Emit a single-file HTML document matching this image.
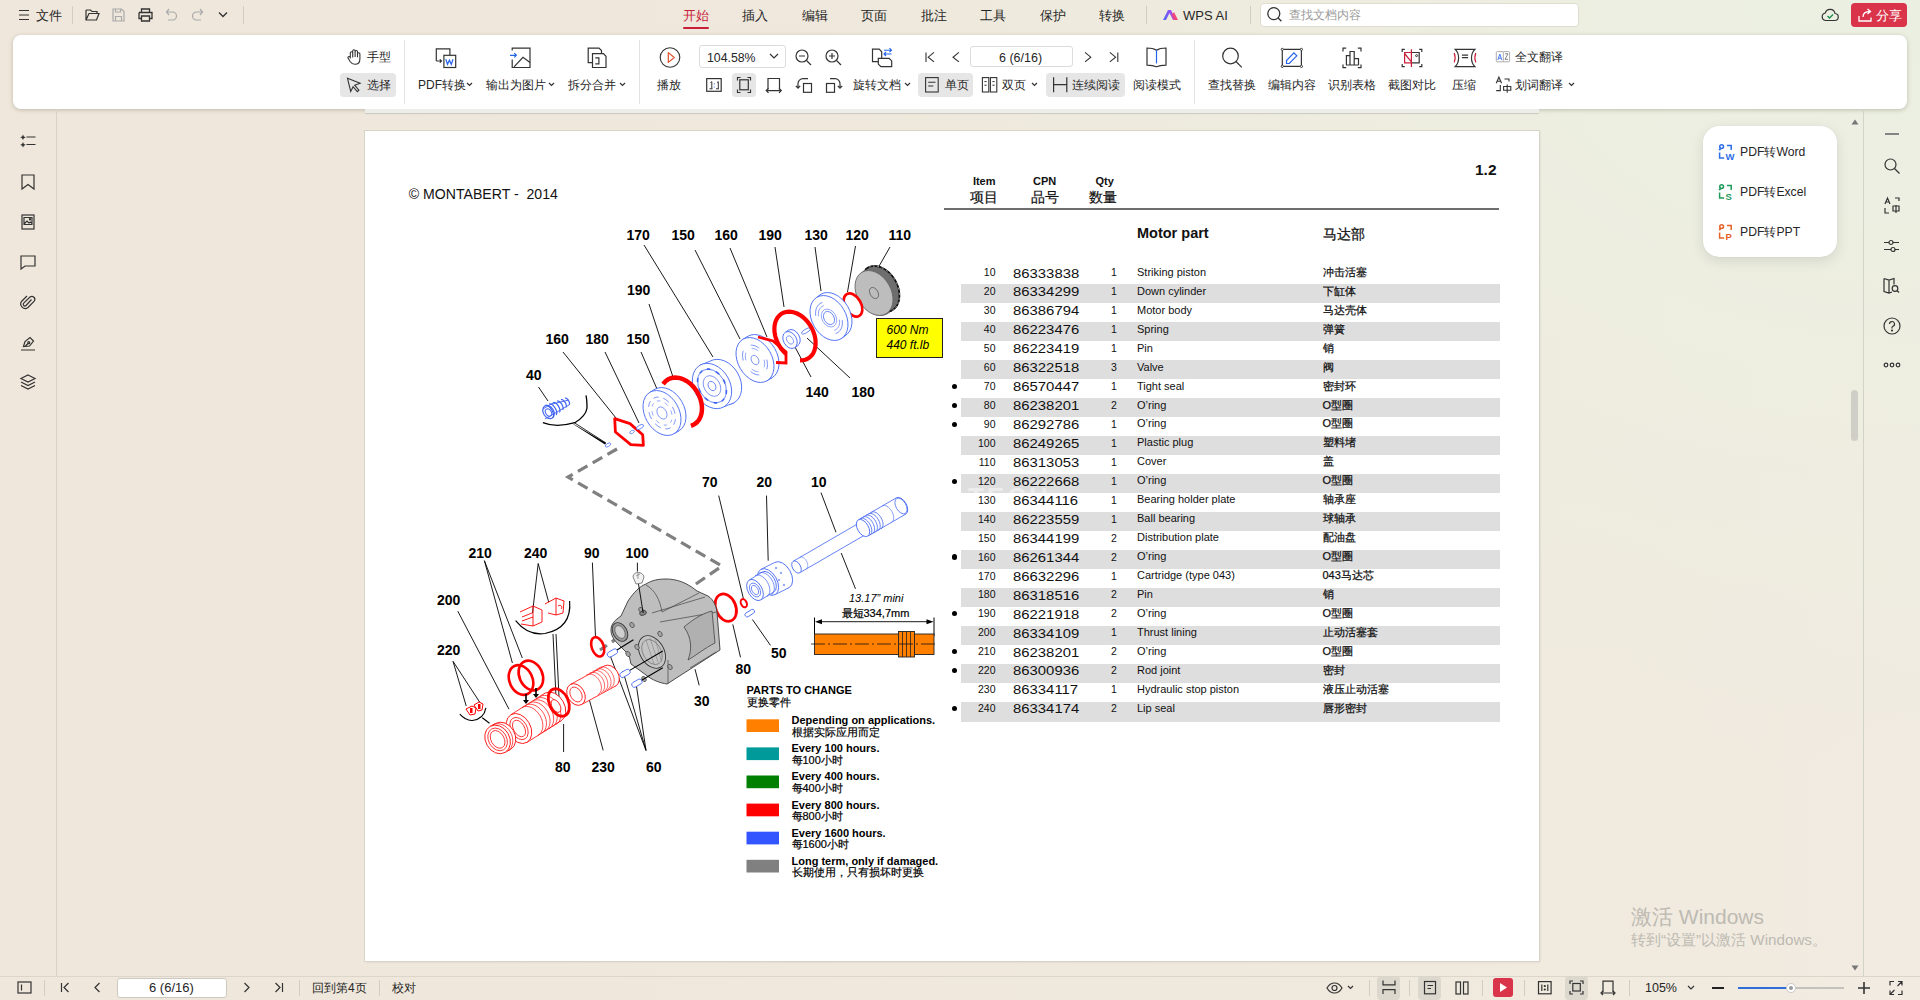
<!DOCTYPE html>
<html><head><meta charset="utf-8">
<style>
*{margin:0;padding:0;box-sizing:border-box}
html,body{width:1920px;height:1000px;overflow:hidden}
body{font-family:"Liberation Sans",sans-serif;color:#222;position:relative;
background:radial-gradient(ellipse 1100px 760px at 1920px 0px,#ebefe1 0%,#ecefe1 25%,rgba(240,236,224,0) 100%),linear-gradient(90deg,#efe7db 0%,#efe8dc 60%,#f1ebe1 100%);}
.a{position:absolute;white-space:nowrap}
.t{font-size:13px;line-height:16px;color:#262626}
.s{font-size:12px;line-height:14px;color:#262626}
.sep{position:absolute;width:1px;background:#d3cdc0}
svg.i{position:absolute;overflow:visible}
.card{position:absolute;left:13px;top:35px;width:1894px;height:74px;background:#fff;border-radius:8px;box-shadow:0 1px 4px rgba(110,110,90,.38)}
.hl{position:absolute;background:#e6e6e6;border-radius:4px}
#page{position:absolute;left:365px;top:131px;width:1174px;height:830px;background:#fff;box-shadow:0 0 0 1px #d8d4c8,1px 1px 2px rgba(0,0,0,.12)}
#prev{position:absolute;left:365px;top:109px;width:1174px;height:4px;background:#ededeb;box-shadow:0 1px 1px #cdc9bd}
.pt{position:absolute;white-space:nowrap;font-family:"Liberation Sans",sans-serif;color:#111}
</style></head><body>

<!-- top menubar -->
<div id="topbar">
<svg class="i" style="left:18px;top:9px" width="12" height="12" viewBox="0 0 12 12"><path d="M1 1.5h10M1 6h10M1 10.5h10" stroke="#333" stroke-width="1.2"/></svg>
<div class="a t" style="left:36px;top:8px">文件</div>
<div class="sep" style="left:72px;top:6px;height:18px"></div>
<svg class="i" style="left:85px;top:8px" width="15" height="14" viewBox="0 0 15 14" fill="none" stroke="#333" stroke-width="1.2"><path d="M1 2h4.5l1.5 1.5h5v2M1 2v10h10.5l2.5-6.5h-10L1 12"/></svg>
<svg class="i" style="left:112px;top:8px" width="13" height="14" viewBox="0 0 13 14" fill="none" stroke="#aaa" stroke-width="1.2"><path d="M1 1h8.5l2.5 2.5V13H1z M3.5 13V8.5h6V13 M3.5 1v3h5V1"/></svg>
<svg class="i" style="left:138px;top:8px" width="15" height="14" viewBox="0 0 15 14" fill="none" stroke="#333" stroke-width="1.3"><path d="M3.5 4.5V1h8v3.5M1 4.5h13v6h-2.5M1 4.5v6h2.5M3.5 8h8v5h-8z"/></svg>
<svg class="i" style="left:165px;top:8px" width="13" height="14" viewBox="0 0 13 14" fill="none" stroke="#aaa" stroke-width="1.2"><path d="M4 1L1.5 4 4 7M1.5 4h6a4 4 0 0 1 0 8H3"/></svg>
<svg class="i" style="left:191px;top:8px" width="13" height="14" viewBox="0 0 13 14" fill="none" stroke="#aaa" stroke-width="1.2"><path d="M9 1l2.5 3L9 7M11.5 4h-6a4 4 0 0 0 0 8H10"/></svg>
<svg class="i" style="left:218px;top:11px" width="10" height="7" viewBox="0 0 10 7" fill="none" stroke="#333" stroke-width="1.3"><path d="M1 1.5l4 4 4-4"/></svg>
<div class="sep" style="left:243px;top:6px;height:18px"></div>

<div class="a t" style="left:683px;top:8px;color:#c9203a">开始</div>
<div class="a" style="left:683px;top:27px;width:26px;height:2px;background:#c9203a;border-radius:1px"></div>
<div class="a t" style="left:742px;top:8px">插入</div>
<div class="a t" style="left:802px;top:8px">编辑</div>
<div class="a t" style="left:861px;top:8px">页面</div>
<div class="a t" style="left:921px;top:8px">批注</div>
<div class="a t" style="left:980px;top:8px">工具</div>
<div class="a t" style="left:1040px;top:8px">保护</div>
<div class="a t" style="left:1099px;top:8px">转换</div>
<div class="sep" style="left:1146px;top:6px;height:18px"></div>
<svg class="i" style="left:1163px;top:9px" width="16" height="12" viewBox="0 0 16 12"><defs><linearGradient id="wg" x1="0" x2="1"><stop offset="0" stop-color="#4a6cf7"/><stop offset=".6" stop-color="#9b4cf0"/><stop offset="1" stop-color="#f0467a"/></linearGradient></defs><path d="M0 11L5 1h3l5 10h-3L6.5 4 3 11z" fill="url(#wg)"/><path d="M9 6l2-3 4 8h-3z" fill="#f0467a"/></svg>
<div class="a t" style="left:1183px;top:8px">WPS AI</div>
<div class="sep" style="left:1250px;top:6px;height:18px"></div>
<div class="a" style="left:1259.5px;top:3px;width:319.5px;height:23.5px;background:#fff;border:1px solid #e0dccf;border-radius:4px"></div>
<svg class="i" style="left:1265px;top:5px" width="20" height="20" viewBox="1265 5 20 20" fill="none" stroke="#333" stroke-width="1.3"><circle cx="1273.8" cy="13.6" r="6"/><path d="M1278 17.8l3.4 3.4"/></svg>
<div class="a t" style="left:1289px;top:7px;color:#9a9a9a;font-size:12.2px">查找文档内容</div>
<svg class="i" style="left:1821px;top:7px" width="18" height="16" viewBox="0 0 18 16" fill="none" stroke="#333" stroke-width="1.2"><path d="M4.5 13.5h9a3.5 3.5 0 0 0 .5-7A5 5 0 0 0 4.3 6 3.8 3.8 0 0 0 4.5 13.5z"/><path d="M6.5 9l2 2 3.5-3.5" stroke="#1a8c4e" stroke-width="1.4"/></svg>
<div class="a" style="left:1851px;top:3px;width:56px;height:24px;background:#d9344a;border-radius:4px"></div>
<svg class="i" style="left:1858px;top:8px" width="16" height="14" viewBox="0 0 16 14" fill="none" stroke="#fff" stroke-width="1.3"><path d="M1 8v5h12V9.5M5 9c0-4 3-5.5 7-5.5M9.5 1l3 2.5-3 2.5"/></svg>
<div class="a t" style="left:1876px;top:8px;color:#fff">分享</div>
</div>

<!-- toolbar card -->
<div class="card"></div>
<svg class="i" style="left:345px;top:47px" width="18" height="19" viewBox="345 47 18 19" fill="none" stroke="#333" stroke-width="1.1"><path d="M350.3 58.5v-5.6a1.2 1.2 0 0 1 2.4 0v4.6M352.7 57.2v-6.3a1.2 1.2 0 0 1 2.4 0v6.1M355.1 57v-5.3a1.2 1.2 0 0 1 2.4 0v5.6M357.5 57.3v-3.3a1.2 1.2 0 0 1 2.4 0v5c0 3.3-2 5.3-5 5.3-2.3 0-3.6-1-4.8-2.8l-2.1-3.4a1.1 1.1 0 0 1 1.8-1.2l.5.6"/></svg>
<div class="a s" style="left:367px;top:50px;">手型</div>
<div class="hl" style="left:340px;top:73px;width:56px;height:24px"></div>
<svg class="i" style="left:345px;top:76px" width="18" height="18" viewBox="345 76 18 18" fill="none" stroke="#333" stroke-width="1.1"><path d="M347.5 78.3l12.6 5-5.4 1.9 4.2 4.9-1.6 1.5-4.2-4.9-2.4 4.8z"/></svg>
<div class="a s" style="left:367px;top:78px;">选择</div>
<div class="sep" style="left:404px;top:40px;height:64px;background:#e3e3e3"></div>
<svg class="i" style="left:434px;top:46px" width="24" height="24" viewBox="434 46 24 24" fill="none" stroke="#333" stroke-width="1.2"><path d="M436.3 61V48.9h13.6v6.2M436.3 61h5M439.8 59.4l1.7 1.6-1.7 1.6"/><rect x="443.9" y="55.3" width="11.8" height="12.2"/><path d="M445.8 59.3l1.7 5 1.9-4.1 1.9 4.1 1.7-5" stroke="#2563eb"/></svg>
<div class="a s" style="left:418px;top:78px;">PDF转换</div>
<svg class="i" style="left:466px;top:82px" width="7" height="5" viewBox="0 0 7 5" fill="none" stroke="#333" stroke-width="1.2"><path d="M1 1l2.5 2.5L6 1"/></svg>
<svg class="i" style="left:508px;top:46px" width="24" height="24" viewBox="508 46 24 24" fill="none" stroke="#333" stroke-width="1.2"><path d="M512.2 59.4v8.1H530V48.1h-17.8v2.5"/><path d="M514 66.8l9-9.5 7 5.3"/><path d="M510 55.3h6.2M514.3 53.2l2.1 2.1-2.1 2.1" stroke="#2563eb"/></svg>
<div class="a s" style="left:486px;top:78px;">输出为图片</div>
<svg class="i" style="left:548px;top:82px" width="7" height="5" viewBox="0 0 7 5" fill="none" stroke="#333" stroke-width="1.2"><path d="M1 1l2.5 2.5L6 1"/></svg>
<svg class="i" style="left:585px;top:46px" width="24" height="24" viewBox="585 46 24 24" fill="none" stroke="#333" stroke-width="1.2"><path d="M592.4 62.6h-4.2V48.1h10.8l2.5 2.5v2.9"/><path d="M592.5 53.7h10.9l2.6 2.6v11.2h-13.5z"/><path d="M595.3 57.8h3.6v6h-3.6"/></svg>
<div class="a s" style="left:568px;top:78px;">拆分合并</div>
<svg class="i" style="left:619px;top:82px" width="7" height="5" viewBox="0 0 7 5" fill="none" stroke="#333" stroke-width="1.2"><path d="M1 1l2.5 2.5L6 1"/></svg>
<div class="sep" style="left:639px;top:40px;height:64px;background:#e3e3e3"></div>
<svg class="i" style="left:658px;top:46px" width="24" height="24" viewBox="658 46 24 24" fill="none" stroke="#333" stroke-width="1.2"><circle cx="670" cy="57.5" r="9.8" stroke-width="1.1"/><path d="M668.3 52.6v9.8l6-4.9z" stroke="#e0502b" stroke-width="1.2" stroke-linejoin="round"/></svg>
<div class="a s" style="left:657px;top:78px;">播放</div>
<div class="a" style="left:699px;top:45px;width:87px;height:23px;border:1px solid #dcdcdc;border-radius:3px;background:#fff"></div>
<div class="a s" style="left:707px;top:51px;font-size:12.3px">104.58%</div>
<svg class="i" style="left:769px;top:53px" width="10" height="7" viewBox="0 0 10 7" fill="none" stroke="#333" stroke-width="1.2"><path d="M1 1l4 4 4-4"/></svg>
<svg class="i" style="left:795px;top:49px" width="17" height="17" viewBox="0 0 17 17" fill="none" stroke="#333" stroke-width="1.2"><circle cx="7" cy="7" r="6"/><path d="M11.5 11.5l4.5 4.5M4 7h6"/></svg>
<svg class="i" style="left:825px;top:49px" width="17" height="17" viewBox="0 0 17 17" fill="none" stroke="#333" stroke-width="1.2"><circle cx="7" cy="7" r="6"/><path d="M11.5 11.5l4.5 4.5M4 7h6M7 4v6"/></svg>
<svg class="i" style="left:870px;top:46px" width="24" height="23" viewBox="870 46 24 23" fill="none" stroke="#333" stroke-width="1.2"><path d="M878.3 61.7h-5.8V49.2h6.7l2.5 2.6v6.5"/><path d="M878.3 58.3h10.8l2.6 2.6v5.8h-10.8l-2.6-2.6z" fill="#fff"/><path d="M884 50.2h7.5M889.5 48.2l2 2-2 2M891.5 54h-7.5M886 52l-2 2 2 2" stroke="#2563eb" stroke-width="1.1"/></svg>
<div class="a s" style="left:853px;top:78px;">旋转文档</div>
<svg class="i" style="left:904px;top:82px" width="7" height="5" viewBox="0 0 7 5" fill="none" stroke="#333" stroke-width="1.2"><path d="M1 1l2.5 2.5L6 1"/></svg>
<svg class="i" style="left:704px;top:76px" width="20" height="18" viewBox="704 76 20 18" fill="none" stroke="#333" stroke-width="1.2"><rect x="706.7" y="78.6" width="14.5" height="12.7"/><path d="M710.5 82.5l1.3-.8v7M717 82.5l1.3-.8v7M709.5 88.8h3M716 88.8h3" stroke-width="1"/><circle cx="714.3" cy="83.8" r=".6" fill="#2563eb" stroke="none"/><circle cx="714.3" cy="87" r=".6" fill="#2563eb" stroke="none"/></svg>
<div class="hl" style="left:732px;top:73px;width:24px;height:24px"></div>
<svg class="i" style="left:735px;top:76px" width="18" height="18" viewBox="735 76 18 18" fill="none" stroke="#333" stroke-width="1.2"><path d="M737.5 80.5v-3h3M747.5 77.5h3v3M750.5 89.5v3h-3M740.5 92.5h-3v-3"/><rect x="739.8" y="79.8" width="8.5" height="10"/></svg>
<svg class="i" style="left:764px;top:76px" width="20" height="18" viewBox="764 76 20 18" fill="none" stroke="#333" stroke-width="1.2"><path d="M768 89.5V78.5h11.5v11"/><path d="M766 90.6h15.5M768.5 88.3l-2.3 2.3 2.3 2.3M779 88.3l2.3 2.3-2.3 2.3"/></svg>
<svg class="i" style="left:795px;top:76px" width="18" height="18" viewBox="795 76 18 18" fill="none" stroke="#333" stroke-width="1.2"><rect x="803.5" y="83.5" width="8" height="8.8"/><path d="M808 78.6h-5a5 5 0 0 0-5 5v4.5M795.8 85.8l2.2 2.4 2.2-2.4"/></svg>
<svg class="i" style="left:825px;top:76px" width="18" height="18" viewBox="825 76 18 18" fill="none" stroke="#333" stroke-width="1.2"><rect x="826.5" y="83.5" width="8" height="8.8"/><path d="M830 78.6h5a5 5 0 0 1 5 5v4.5M837.8 85.8l2.2 2.4 2.2-2.4"/></svg>
<svg class="i" style="left:924px;top:50px" width="13" height="14" viewBox="924 50 13 14" fill="none" stroke="#333" stroke-width="1.1"><path d="M926 52.4v9.5M934 52.4l-5.8 4.8 5.8 4.7"/></svg>
<svg class="i" style="left:951px;top:50px" width="10" height="14" viewBox="951 50 10 14" fill="none" stroke="#333" stroke-width="1.1"><path d="M958.9 52.4l-5.9 4.8 5.9 4.7"/></svg>
<div class="a" style="left:970px;top:46px;width:103px;height:21px;border:1px solid #dcdcdc;border-radius:3px;background:#fff"></div>
<div class="a s" style="left:999px;top:51px;font-size:12.5px">6 (6/16)</div>
<svg class="i" style="left:1083px;top:50px" width="10" height="14" viewBox="1083 50 10 14" fill="none" stroke="#333" stroke-width="1.1"><path d="M1085 52.4l5.8 4.8-5.8 4.7"/></svg>
<svg class="i" style="left:1108px;top:50px" width="12" height="14" viewBox="1108 50 12 14" fill="none" stroke="#333" stroke-width="1.1"><path d="M1109.8 52.4l5.8 4.8-5.8 4.7M1117.8 52.4v9.5"/></svg>
<svg class="i" style="left:1145px;top:46px" width="24" height="23" viewBox="1145 46 24 23" fill="none" stroke="#333" stroke-width="1.2"><path d="M1156.5 50.2c-2.5-1.6-5.6-2.2-9.5-2.2v17.2c3.9 0 7 .4 9.5 1.6 2.5-1.2 5.6-1.6 9.5-1.6V48c-3.9 0-7 .6-9.5 2.2z"/><path d="M1156.5 49.8v13.6" stroke="#2563eb"/></svg>
<div class="a s" style="left:1133px;top:78px;">阅读模式</div>
<div class="hl" style="left:918px;top:73px;width:55px;height:24px"></div>
<svg class="i" style="left:924px;top:76px" width="16" height="18" viewBox="924 76 16 18" fill="none" stroke="#333" stroke-width="1.1"><rect x="925.6" y="77.6" width="12.6" height="14.4"/><path d="M928.2 82.3h7.3M928.2 86h5.1"/></svg>
<div class="a s" style="left:945px;top:78px;">单页</div>
<svg class="i" style="left:981px;top:76px" width="18" height="18" viewBox="981 76 18 18" fill="none" stroke="#333" stroke-width="1.1"><rect x="982.4" y="77.6" width="6.4" height="14.4"/><rect x="990.4" y="77.6" width="6.4" height="14.4"/><path d="M984.4 81.6h2.2M984.4 85.2h2.2M992.4 81.6h2.2M992.4 85.2h2.2" stroke-width="1"/></svg>
<div class="a s" style="left:1002px;top:78px;">双页</div>
<svg class="i" style="left:1031px;top:82px" width="7" height="5" viewBox="0 0 7 5" fill="none" stroke="#333" stroke-width="1.2"><path d="M1 1l2.5 2.5L6 1"/></svg>
<div class="hl" style="left:1046px;top:73px;width:79px;height:24px"></div>
<svg class="i" style="left:1052px;top:76px" width="17" height="18" viewBox="1052 76 17 18" fill="none" stroke="#333" stroke-width="1.2"><path d="M1053.6 77.2v15M1066.8 77.2v15M1053.6 84.6h13.2"/></svg>
<div class="a s" style="left:1072px;top:78px;">连续阅读</div>
<div class="sep" style="left:1194px;top:40px;height:64px;background:#e3e3e3"></div>
<svg class="i" style="left:1218px;top:44px" width="26" height="26" viewBox="1218 44 26 26" fill="none" stroke="#333" stroke-width="1.2"><circle cx="1230.5" cy="56" r="7.8"/><path d="M1236 61.5l5.8 5.8"/></svg>
<div class="a s" style="left:1208px;top:78px;">查找替换</div>
<svg class="i" style="left:1279px;top:46px" width="26" height="24" viewBox="1279 46 26 24" fill="none" stroke="#333" stroke-width="1.2"><path d="M1283.6 49.4h16.5M1283.6 66.4h16.5M1282.3 50.7v14.4M1301.4 50.7v14.4"/><circle cx="1282.3" cy="49.4" r="1.1" stroke-width="1"/><circle cx="1301.4" cy="49.4" r="1.1" stroke-width="1"/><circle cx="1282.3" cy="66.4" r="1.1" stroke-width="1"/><circle cx="1301.4" cy="66.4" r="1.1" stroke-width="1"/><path d="M1286.5 63.5v-3l7.4-7.6 2.9 2.9-7.5 7.7z" stroke="#2563eb"/></svg>
<div class="a s" style="left:1268px;top:78px;">编辑内容</div>
<svg class="i" style="left:1340px;top:46px" width="24" height="24" viewBox="1340 46 24 24" fill="none" stroke="#333" stroke-width="1.2"><path d="M1343 51.4v-3.2h3.2M1357.8 48.2h3.2v3.2M1361 64.4v3.2h-3.2M1346.2 67.6H1343v-3.2"/><path d="M1346.4 65v-9.4h3.6V65M1350 65V51.5h4.2V65M1354.2 65v-6.3h4.3V65M1346 65h12.8"/></svg>
<div class="a s" style="left:1328px;top:78px;">识别表格</div>
<svg class="i" style="left:1400px;top:47px" width="24" height="22" viewBox="1400 47 24 22" fill="none" stroke="#333" stroke-width="1.2"><path d="M1402.2 52v-2.6h2.6M1419.2 49.4h2.6V52M1421.8 64v2.6h-2.6M1404.8 66.6h-2.6V64"/><path d="M1411.4 52.5h7.8v10.4h-7.8"/><circle cx="1416.6" cy="55.6" r="1" stroke-width="1"/><path d="M1411.4 52.5h-6.8v10.4h6.8M1411.4 49.2v17.7M1404.6 53.5l6.8 8.4" stroke="#c9203a"/></svg>
<div class="a s" style="left:1388px;top:78px;">截图对比</div>
<svg class="i" style="left:1450px;top:46px" width="30" height="24" viewBox="1450 46 30 24" fill="none" stroke="#333" stroke-width="1.2"><path d="M1455.2 49.4h19.7c-2.6 2.5-3.4 5.3-3.4 8.6s.8 6.1 3.4 8.6h-19.7c2.6-2.5 3.4-5.3 3.4-8.6s-.8-6.1-3.4-8.6z"/><path d="M1461.9 55.1h6.2M1461.9 57.7h6.2"/><path d="M1454.2 53c1.2 3 1.2 6.4 0 9.4M1475.8 53c-1.2 3-1.2 6.4 0 9.4" stroke="#c9203a"/></svg>
<div class="a s" style="left:1452px;top:78px;">压缩</div>
<svg class="i" style="left:1494px;top:49px" width="18" height="15" viewBox="1494 49 18 15" fill="none" stroke="#333" stroke-width="1.2"><rect x="1502.6" y="51.6" width="7" height="10.2" rx="1" stroke="#aaa" stroke-width="1"/><rect x="1496.3" y="51.6" width="7" height="10.2" rx="1" fill="#fff" stroke="#aaa" stroke-width="1"/><path d="M1497.8 60l2-6 2 6M1498.5 58.2h2.6" stroke="#4a7cf0" stroke-width="1"/><path d="M1505 53.8h3l-3 5.5h3" stroke="#777" stroke-width=".9"/></svg>
<div class="a s" style="left:1515px;top:50px;">全文翻译</div>
<svg class="i" style="left:1494px;top:76px" width="20" height="18" viewBox="1494 76 20 18" fill="none" stroke="#333" stroke-width="1.2"><path d="M1496.2 83.2l2.7-6 2.7 6M1497 81.3h3.8" stroke-width="1.1"/><path d="M1504.5 79h4.5v2.5M1500.3 85v5.6h-4.1M1503.6 86.5h7.2v3.8h-7.2zM1507.2 84.5v8.2" stroke-width="1.1"/></svg>
<div class="a s" style="left:1515px;top:78px;">划词翻译</div>
<svg class="i" style="left:1568px;top:82px" width="7" height="5" viewBox="0 0 7 5" fill="none" stroke="#333" stroke-width="1.2"><path d="M1 1l2.5 2.5L6 1"/></svg>


<!-- left sidebar -->
<div class="sep" style="left:56px;top:109px;height:867px;background:#d6d2c8"></div>
<!-- right sidebar -->
<div class="sep" style="left:1863px;top:109px;height:867px;background:#d3d4c8"></div>

<!-- pages -->
<div id="prev"></div>
<div id="page"></div>
<!--DIAG-->
<svg class="i" style="left:0;top:0" width="1920" height="1000" viewBox="0 0 1920 1000">
<style>.lb{font-family:"Liberation Sans";font-weight:bold;font-size:14px;fill:#000}.it{font-family:"Liberation Sans";font-style:italic;font-size:12px;fill:#000}.lg{font-family:"Liberation Sans";font-size:11px;fill:#000;stroke:#000;stroke-width:0.2px}</style>
<text x="408.8" y="198.8" style="font-family:Liberation Sans;font-size:14.1px;fill:#111;white-space:pre">© MONTABERT -  2014</text>
<polyline points="617,449 568,477 722,566 600,650" fill="none" stroke="#808080" stroke-width="3.2" stroke-dasharray="11,6"/>
<text x="626.5" y="239.5" class="lb">170</text>
<text x="671.5" y="239.5" class="lb">150</text>
<text x="714.5" y="239.5" class="lb">160</text>
<text x="758.5" y="239.5" class="lb">190</text>
<text x="804.5" y="239.5" class="lb">130</text>
<text x="845.5" y="239.5" class="lb">120</text>
<text x="888.5" y="239.5" class="lb">110</text>
<text x="627" y="294.5" class="lb">190</text>
<text x="545.5" y="344" class="lb">160</text>
<text x="585.5" y="344" class="lb">180</text>
<text x="626.5" y="344" class="lb">150</text>
<text x="526" y="380" class="lb">40</text>
<text x="805.5" y="397" class="lb">140</text>
<text x="851.5" y="397" class="lb">180</text>
<line x1="644" y1="245" x2="713" y2="357" stroke="#000" stroke-width="0.9"/>
<line x1="695" y1="250" x2="740" y2="339" stroke="#000" stroke-width="0.9"/>
<line x1="730" y1="248" x2="767" y2="337" stroke="#000" stroke-width="0.9"/>
<line x1="775" y1="247" x2="784" y2="307" stroke="#000" stroke-width="0.9"/>
<line x1="815" y1="247" x2="821" y2="291" stroke="#000" stroke-width="0.9"/>
<line x1="855.5" y1="246" x2="847.5" y2="292" stroke="#000" stroke-width="0.9"/>
<line x1="890" y1="247" x2="878" y2="268" stroke="#000" stroke-width="0.9"/>
<line x1="649" y1="304" x2="673" y2="377" stroke="#000" stroke-width="0.9"/>
<line x1="563" y1="352" x2="616" y2="418" stroke="#000" stroke-width="0.9"/>
<line x1="605" y1="352" x2="639" y2="423" stroke="#000" stroke-width="0.9"/>
<line x1="641" y1="352" x2="657" y2="389" stroke="#000" stroke-width="0.9"/>
<line x1="538.5" y1="387" x2="548" y2="401" stroke="#000" stroke-width="0.9"/>
<line x1="795" y1="347" x2="811" y2="377" stroke="#000" stroke-width="0.9"/>
<line x1="807" y1="338" x2="850" y2="378" stroke="#000" stroke-width="0.9"/>
<ellipse cx="880" cy="289" rx="17.5" ry="24.5" transform="rotate(-30 880 289)" stroke="#222" stroke-width="1.2" fill="#6e6e6e" />
<ellipse cx="879" cy="289.8" rx="17.5" ry="24.5" transform="rotate(-30 879 289.8)" stroke="none" stroke-width="0" fill="#6e6e6e" />
<ellipse cx="878" cy="290.6" rx="17.5" ry="24.5" transform="rotate(-30 878 290.6)" stroke="none" stroke-width="0" fill="#6e6e6e" />
<ellipse cx="877" cy="291.4" rx="17.5" ry="24.5" transform="rotate(-30 877 291.4)" stroke="none" stroke-width="0" fill="#6e6e6e" />
<ellipse cx="876" cy="292.2" rx="17.5" ry="24.5" transform="rotate(-30 876 292.2)" stroke="none" stroke-width="0" fill="#6e6e6e" />
<ellipse cx="875" cy="293.0" rx="17.5" ry="24.5" transform="rotate(-30 875 293.0)" stroke="none" stroke-width="0" fill="#6e6e6e" />
<polyline points="865.30,269.62 866.48,268.63 867.75,267.78 869.12,267.10 870.57,266.59 872.09,266.24 873.67,266.07 875.30,266.07 876.97,266.25 878.66,266.60 880.36,267.12 882.05,267.81 883.74,268.66 885.39,269.66 887.00,270.81 888.56,272.10 890.05,273.52 891.47,275.06 892.80,276.70 894.03,278.43 895.16,280.25 896.17,282.13 897.05,284.07 897.81,286.04 898.43,288.03 898.91,290.04 899.25,292.03 899.44,294.00 899.48,295.94 899.38,297.82 899.13,299.63 898.73,301.36 898.19,303.00 897.51,304.53 896.69,305.95 895.76,307.23 894.70,308.38 893.52,309.37 892.25,310.22 890.88,310.90 889.43,311.41" fill="none" stroke="#111" stroke-width="1.6" stroke-linecap="butt"/>
<polyline points="869.12,267.10 869.59,266.91 870.08,266.74 870.57,266.59" fill="none" stroke="#ddd" stroke-width="0.8" stroke-linecap="butt"/>
<polyline points="873.03,266.12 873.57,266.08 874.10,266.05 874.65,266.05" fill="none" stroke="#ddd" stroke-width="0.8" stroke-linecap="butt"/>
<polyline points="877.31,266.31 877.87,266.42 878.43,266.54 879.00,266.69" fill="none" stroke="#ddd" stroke-width="0.8" stroke-linecap="butt"/>
<polyline points="881.72,267.66 882.28,267.91 882.84,268.19 883.40,268.48" fill="none" stroke="#ddd" stroke-width="0.8" stroke-linecap="butt"/>
<polyline points="886.04,270.11 886.57,270.49 887.11,270.90 887.63,271.31" fill="none" stroke="#ddd" stroke-width="0.8" stroke-linecap="butt"/>
<polyline points="890.05,273.52 890.53,274.02 891.01,274.53 891.47,275.06" fill="none" stroke="#ddd" stroke-width="0.8" stroke-linecap="butt"/>
<polyline points="893.55,277.73 893.95,278.32 894.34,278.91 894.72,279.51" fill="none" stroke="#ddd" stroke-width="0.8" stroke-linecap="butt"/>
<polyline points="896.35,282.52 896.65,283.16 896.94,283.81 897.21,284.46" fill="none" stroke="#ddd" stroke-width="0.8" stroke-linecap="butt"/>
<polyline points="898.32,287.63 898.50,288.30 898.67,288.97 898.83,289.64" fill="none" stroke="#ddd" stroke-width="0.8" stroke-linecap="butt"/>
<polyline points="899.34,292.82 899.40,293.48 899.45,294.13 899.48,294.78" fill="none" stroke="#ddd" stroke-width="0.8" stroke-linecap="butt"/>
<polyline points="899.38,297.82 899.31,298.43 899.23,299.03 899.13,299.63" fill="none" stroke="#ddd" stroke-width="0.8" stroke-linecap="butt"/>
<polyline points="898.42,302.36 898.23,302.89 898.02,303.42 897.80,303.93" fill="none" stroke="#ddd" stroke-width="0.8" stroke-linecap="butt"/>
<polyline points="896.52,306.21 896.21,306.65 895.89,307.07 895.55,307.47" fill="none" stroke="#ddd" stroke-width="0.8" stroke-linecap="butt"/>
<polyline points="893.77,309.19 893.36,309.50 892.94,309.79 892.51,310.06" fill="none" stroke="#ddd" stroke-width="0.8" stroke-linecap="butt"/>
<ellipse cx="874" cy="293" rx="17" ry="24" transform="rotate(-30 874 293)" stroke="#666" stroke-width="0.8" fill="#bdbdbd" />
<ellipse cx="874" cy="293" rx="4" ry="6" transform="rotate(-30 874 293)" stroke="#555" stroke-width="0.7" fill="none" />
<ellipse cx="853" cy="305" rx="8" ry="12.5" transform="rotate(-30 853 305)" stroke="#ff0000" stroke-width="2.6" fill="none" />
<ellipse cx="833" cy="315" rx="17" ry="24" transform="rotate(-30 833 315)" stroke="#3f63f2" stroke-width="0.8" fill="#fff" /><polygon points="817.0,297.2153903091735 821.0,294.2153903091735 845.0,335.7846096908265 841.0,338.7846096908265" fill="#fff" stroke="none"/><line x1="817.0" y1="297.2153903091735" x2="821.0" y2="294.2153903091735" stroke="#3f63f2" stroke-width="0.8"/><line x1="841.0" y1="338.7846096908265" x2="845.0" y2="335.7846096908265" stroke="#3f63f2" stroke-width="0.8"/><ellipse cx="829" cy="318" rx="17" ry="24" transform="rotate(-30 829 318)" stroke="#3f63f2" stroke-width="0.8" fill="#fff" />
<ellipse cx="829" cy="318" rx="5" ry="7" transform="rotate(-30 829 318)" stroke="#3f63f2" stroke-width="0.7" fill="none" />
<ellipse cx="829" cy="318" rx="7" ry="9.5" transform="rotate(-30 829 318)" stroke="#3f63f2" stroke-width="0.5" fill="none" />
<polyline points="842.25,320.17 842.42,322.07 842.38,323.91 842.15,325.67 841.72,327.31 841.10,328.81 840.30,330.15 839.33,331.31 838.20,332.27 836.94,333.02 835.57,333.54" fill="none" stroke="#3f63f2" stroke-width="0.7" stroke-linecap="butt"/>
<polyline points="839.50,319.73 839.63,321.24 839.61,322.70 839.42,324.10 839.08,325.40 838.59,326.59 837.96,327.65 837.20,328.57 836.31,329.33 835.31,329.92 834.22,330.34" fill="none" stroke="#3f63f2" stroke-width="0.6" stroke-linecap="butt"/>
<polyline points="815.75,315.83 815.58,313.93 815.62,312.09 815.85,310.33 816.28,308.69 816.90,307.19 817.70,305.85 818.67,304.69 819.80,303.73 821.06,302.98 822.43,302.46" fill="none" stroke="#3f63f2" stroke-width="0.7" stroke-linecap="butt"/>
<polyline points="818.50,316.27 818.37,314.76 818.39,313.30 818.58,311.90 818.92,310.60 819.41,309.41 820.04,308.35 820.80,307.43 821.69,306.67 822.69,306.08 823.78,305.66" fill="none" stroke="#3f63f2" stroke-width="0.6" stroke-linecap="butt"/>
<ellipse cx="793" cy="338" rx="6.5" ry="9" transform="rotate(-30 793 338)" stroke="#3f63f2" stroke-width="0.8" fill="#fff" /><polygon points="785.5,332.20577136594005 788.5,330.20577136594005 797.5,345.79422863405995 794.5,347.79422863405995" fill="#fff" stroke="none"/><line x1="785.5" y1="332.20577136594005" x2="788.5" y2="330.20577136594005" stroke="#3f63f2" stroke-width="0.8"/><line x1="794.5" y1="347.79422863405995" x2="797.5" y2="345.79422863405995" stroke="#3f63f2" stroke-width="0.8"/><ellipse cx="790" cy="340" rx="6.5" ry="9" transform="rotate(-30 790 340)" stroke="#3f63f2" stroke-width="0.8" fill="#fff" />
<ellipse cx="790" cy="340" rx="3" ry="4.5" transform="rotate(-30 790 340)" stroke="#3f63f2" stroke-width="0.6" fill="none" />
<ellipse cx="806" cy="331" rx="1.8" ry="5" transform="rotate(60 806 331)" stroke="#3f63f2" stroke-width="0.7" fill="#fff" />
<polyline points="785.97,353.90 783.48,351.43 781.21,348.66 779.21,345.64 777.51,342.44 776.16,339.11 775.17,335.72 774.57,332.33 774.37,329.02 774.57,325.84 775.16,322.86 776.14,320.14 777.49,317.72 779.18,315.66 781.18,314.00 783.45,312.76 785.94,311.98 788.61,311.66 791.40,311.82 794.26,312.45 797.14,313.54 799.97,315.06 802.71,316.99 805.30,319.30 807.69,321.92 809.83,324.82 811.68,327.94 813.21,331.22 814.38,334.58 815.18,337.98 815.58,341.34 815.58,344.59 815.19,347.68 814.39,350.54 813.23,353.11 811.70,355.36 809.86,357.22 807.72,358.67 805.33,359.69 802.75,360.24 800.01,360.32" fill="none" stroke="#ff0000" stroke-width="4.2" stroke-linecap="butt"/>
<ellipse cx="760" cy="357" rx="17" ry="24" transform="rotate(-30 760 357)" stroke="#3f63f2" stroke-width="0.8" fill="#fff" /><polygon points="743.0,339.2153903091735 748.0,336.2153903091735 772.0,377.7846096908265 767.0,380.7846096908265" fill="#fff" stroke="none"/><line x1="743.0" y1="339.2153903091735" x2="748.0" y2="336.2153903091735" stroke="#3f63f2" stroke-width="0.8"/><line x1="767.0" y1="380.7846096908265" x2="772.0" y2="377.7846096908265" stroke="#3f63f2" stroke-width="0.8"/><ellipse cx="755" cy="360" rx="17" ry="24" transform="rotate(-30 755 360)" stroke="#3f63f2" stroke-width="0.8" fill="#fff" />
<ellipse cx="755" cy="360" rx="3.5" ry="5" transform="rotate(-30 755 360)" stroke="#3f63f2" stroke-width="0.6" fill="none" />
<polyline points="766.69,359.57 767.01,360.87 767.25,362.17 767.39,363.44 767.44,364.69 767.39,365.91 767.25,367.08 767.02,368.20 766.69,369.25" fill="none" stroke="#3f63f2" stroke-width="0.7" stroke-linecap="butt"/>
<polyline points="764.05,359.71 764.31,360.72 764.50,361.73 764.61,362.73 764.66,363.70 764.62,364.65 764.52,365.56 764.34,366.43 764.09,367.25" fill="none" stroke="#3f63f2" stroke-width="0.6" stroke-linecap="butt"/>
<polyline points="759.26,374.90 758.22,374.88 757.17,374.75 756.09,374.51 755.00,374.15 753.92,373.69 752.84,373.12 751.79,372.45 750.75,371.69" fill="none" stroke="#3f63f2" stroke-width="0.7" stroke-linecap="butt"/>
<polyline points="758.36,371.63 757.55,371.61 756.73,371.50 755.90,371.31 755.06,371.02 754.21,370.66 753.38,370.21 752.55,369.69 751.75,369.09" fill="none" stroke="#3f63f2" stroke-width="0.6" stroke-linecap="butt"/>
<polyline points="743.31,360.43 742.99,359.13 742.75,357.83 742.61,356.56 742.56,355.31 742.61,354.09 742.75,352.92 742.98,351.80 743.31,350.75" fill="none" stroke="#3f63f2" stroke-width="0.7" stroke-linecap="butt"/>
<polyline points="745.95,360.29 745.69,359.28 745.50,358.27 745.39,357.27 745.34,356.30 745.38,355.35 745.48,354.44 745.66,353.57 745.91,352.75" fill="none" stroke="#3f63f2" stroke-width="0.6" stroke-linecap="butt"/>
<polyline points="750.74,345.10 751.78,345.12 752.83,345.25 753.91,345.49 755.00,345.85 756.08,346.31 757.16,346.88 758.21,347.55 759.25,348.31" fill="none" stroke="#3f63f2" stroke-width="0.7" stroke-linecap="butt"/>
<polyline points="751.64,348.37 752.45,348.39 753.27,348.50 754.10,348.69 754.94,348.98 755.79,349.34 756.62,349.79 757.45,350.31 758.25,350.91" fill="none" stroke="#3f63f2" stroke-width="0.6" stroke-linecap="butt"/>
<polyline points="758,337 773,341 786,352 786,363 776,362.5" fill="none" stroke="#ff0000" stroke-width="2.8"/>
<ellipse cx="722" cy="382" rx="18" ry="24" transform="rotate(-30 722 382)" stroke="#3f63f2" stroke-width="0.8" fill="#fff" /><polygon points="700.0,365.2153903091735 710.0,361.2153903091735 734.0,402.7846096908265 724.0,406.7846096908265" fill="#fff" stroke="none"/><line x1="700.0" y1="365.2153903091735" x2="710.0" y2="361.2153903091735" stroke="#3f63f2" stroke-width="0.8"/><line x1="724.0" y1="406.7846096908265" x2="734.0" y2="402.7846096908265" stroke="#3f63f2" stroke-width="0.8"/><ellipse cx="712" cy="386" rx="18" ry="24" transform="rotate(-30 712 386)" stroke="#3f63f2" stroke-width="0.8" fill="#fff" />
<ellipse cx="712" cy="386" rx="13" ry="18" transform="rotate(-30 712 386)" stroke="#3f63f2" stroke-width="0.7" fill="none" />
<ellipse cx="712" cy="386" rx="3.5" ry="5" transform="rotate(-30 712 386)" stroke="#3f63f2" stroke-width="0.7" fill="none" />
<polyline points="723.26,379.50 723.79,380.46 724.27,381.45 724.71,382.45 725.10,383.46" fill="none" stroke="#3f63f2" stroke-width="1.6" stroke-linecap="butt"/>
<polyline points="726.40,389.90 726.41,390.90 726.37,391.88 726.28,392.83 726.13,393.76" fill="none" stroke="#3f63f2" stroke-width="1.6" stroke-linecap="butt"/>
<polyline points="724.04,398.82 723.53,399.46 722.98,400.06 722.39,400.61 721.76,401.10" fill="none" stroke="#3f63f2" stroke-width="1.6" stroke-linecap="butt"/>
<polyline points="717.08,402.83 716.25,402.89 715.40,402.87 714.54,402.80 713.67,402.66" fill="none" stroke="#3f63f2" stroke-width="1.6" stroke-linecap="butt"/>
<polyline points="708.18,400.42 707.34,399.86 706.52,399.24 705.71,398.58 704.93,397.87" fill="none" stroke="#3f63f2" stroke-width="1.6" stroke-linecap="butt"/>
<polyline points="700.74,392.50 700.21,391.54 699.73,390.55 699.29,389.55 698.90,388.54" fill="none" stroke="#3f63f2" stroke-width="1.6" stroke-linecap="butt"/>
<polyline points="697.60,382.10 697.59,381.10 697.63,380.12 697.72,379.17 697.87,378.24" fill="none" stroke="#3f63f2" stroke-width="1.6" stroke-linecap="butt"/>
<polyline points="699.96,373.18 700.47,372.54 701.02,371.94 701.61,371.39 702.24,370.90" fill="none" stroke="#3f63f2" stroke-width="1.6" stroke-linecap="butt"/>
<polyline points="706.92,369.17 707.75,369.11 708.60,369.13 709.46,369.20 710.33,369.34" fill="none" stroke="#3f63f2" stroke-width="1.6" stroke-linecap="butt"/>
<polyline points="715.82,371.58 716.66,372.14 717.48,372.76 718.29,373.42 719.07,374.13" fill="none" stroke="#3f63f2" stroke-width="1.6" stroke-linecap="butt"/>
<ellipse cx="712" cy="386" rx="8" ry="11" transform="rotate(-30 712 386)" stroke="#3f63f2" stroke-width="0.6" fill="none" />
<polyline points="663.16,384.09 664.24,382.64 665.46,381.36 666.82,380.25 668.29,379.32 669.87,378.58 671.54,378.04 673.29,377.70 675.11,377.56 676.98,377.63 678.88,377.91 680.79,378.38 682.71,379.05 684.62,379.92 686.49,380.97 688.32,382.20 690.09,383.59 691.78,385.14 693.38,386.83 694.88,388.64 696.26,390.57 697.51,392.60 698.62,394.70 699.59,396.87 700.40,399.07 701.05,401.31 701.53,403.55 701.83,405.77 701.96,407.96 701.92,410.11 701.70,412.18 701.31,414.17 700.74,416.06 700.01,417.83 699.13,419.47 698.09,420.96 696.90,422.29 695.58,423.45 694.14,424.43 692.59,425.23 690.95,425.82" fill="none" stroke="#ff0000" stroke-width="4.5" stroke-linecap="butt"/>
<ellipse cx="667" cy="410" rx="17" ry="24" transform="rotate(-30 667 410)" stroke="#3f63f2" stroke-width="0.8" fill="#fff" /><polygon points="650.0,392.2153903091735 655.0,389.2153903091735 679.0,430.7846096908265 674.0,433.7846096908265" fill="#fff" stroke="none"/><line x1="650.0" y1="392.2153903091735" x2="655.0" y2="389.2153903091735" stroke="#3f63f2" stroke-width="0.8"/><line x1="674.0" y1="433.7846096908265" x2="679.0" y2="430.7846096908265" stroke="#3f63f2" stroke-width="0.8"/><ellipse cx="662" cy="413" rx="17" ry="24" transform="rotate(-30 662 413)" stroke="#3f63f2" stroke-width="0.8" fill="#fff" />
<ellipse cx="662" cy="413" rx="4.5" ry="6.5" transform="rotate(-30 662 413)" stroke="#3f63f2" stroke-width="0.6" fill="none" />
<polyline points="672.39,407.00 672.98,408.09 673.51,409.20 673.99,410.33 674.39,411.47 674.74,412.63 675.01,413.78" fill="none" stroke="#3f63f2" stroke-width="0.7" stroke-linecap="butt"/>
<polyline points="670.80,410.52 671.08,411.22 671.33,411.92 671.55,412.62 671.73,413.33 671.88,414.03 672.00,414.73" fill="none" stroke="#3f63f2" stroke-width="0.6" stroke-linecap="butt"/>
<polyline points="675.36,419.17 675.23,420.22 675.02,421.23 674.75,422.19 674.41,423.11 674.01,423.98 673.54,424.78" fill="none" stroke="#3f63f2" stroke-width="0.7" stroke-linecap="butt"/>
<polyline points="671.80,419.64 671.62,420.22 671.42,420.77 671.18,421.30 670.92,421.80 670.62,422.27 670.30,422.71" fill="none" stroke="#3f63f2" stroke-width="0.6" stroke-linecap="butt"/>
<polyline points="670.50,427.72 669.72,428.12 668.90,428.44 668.05,428.67 667.16,428.82 666.25,428.89 665.31,428.88" fill="none" stroke="#3f63f2" stroke-width="0.7" stroke-linecap="butt"/>
<polyline points="667.05,424.87 666.53,424.99 665.99,425.08 665.44,425.12 664.88,425.12 664.31,425.08 663.73,425.00" fill="none" stroke="#3f63f2" stroke-width="0.6" stroke-linecap="butt"/>
<polyline points="660.66,427.65 659.69,427.17 658.74,426.60 657.80,425.97 656.89,425.27 656.00,424.50 655.14,423.67" fill="none" stroke="#3f63f2" stroke-width="0.7" stroke-linecap="butt"/>
<polyline points="659.34,423.14 658.78,422.74 658.22,422.30 657.68,421.84 657.16,421.34 656.65,420.81 656.15,420.26" fill="none" stroke="#3f63f2" stroke-width="0.6" stroke-linecap="butt"/>
<polyline points="651.61,419.00 651.02,417.91 650.49,416.80 650.01,415.67 649.61,414.53 649.26,413.37 648.99,412.22" fill="none" stroke="#3f63f2" stroke-width="0.7" stroke-linecap="butt"/>
<polyline points="653.20,415.48 652.92,414.78 652.67,414.08 652.45,413.38 652.27,412.67 652.12,411.97 652.00,411.27" fill="none" stroke="#3f63f2" stroke-width="0.6" stroke-linecap="butt"/>
<polyline points="648.64,406.83 648.77,405.78 648.98,404.77 649.25,403.81 649.59,402.89 649.99,402.02 650.46,401.22" fill="none" stroke="#3f63f2" stroke-width="0.7" stroke-linecap="butt"/>
<polyline points="652.20,406.36 652.38,405.78 652.58,405.23 652.82,404.70 653.08,404.20 653.38,403.73 653.70,403.29" fill="none" stroke="#3f63f2" stroke-width="0.6" stroke-linecap="butt"/>
<polyline points="653.50,398.28 654.28,397.88 655.10,397.56 655.95,397.33 656.84,397.18 657.75,397.11 658.69,397.12" fill="none" stroke="#3f63f2" stroke-width="0.7" stroke-linecap="butt"/>
<polyline points="656.95,401.13 657.47,401.01 658.01,400.92 658.56,400.88 659.12,400.88 659.69,400.92 660.27,401.00" fill="none" stroke="#3f63f2" stroke-width="0.6" stroke-linecap="butt"/>
<polyline points="663.34,398.35 664.31,398.83 665.26,399.40 666.20,400.03 667.11,400.73 668.00,401.50 668.86,402.33" fill="none" stroke="#3f63f2" stroke-width="0.7" stroke-linecap="butt"/>
<polyline points="664.66,402.86 665.22,403.26 665.78,403.70 666.32,404.16 666.84,404.66 667.35,405.19 667.85,405.74" fill="none" stroke="#3f63f2" stroke-width="0.6" stroke-linecap="butt"/>
<polygon points="614.7,418.7 630,423.6 642.7,434.8 643.4,445.3 630.8,444.6 615.4,432" fill="none" stroke="#ff0000" stroke-width="2.8" stroke-linejoin="round"/>
<ellipse cx="640" cy="427" rx="1.8" ry="4" transform="rotate(60 640 427)" stroke="#3f63f2" stroke-width="0.7" fill="#fff" />
<ellipse cx="632" cy="432" rx="1.5" ry="2.5" transform="rotate(60 632 432)" stroke="#3f63f2" stroke-width="0.6" fill="#fff" />
<ellipse cx="608" cy="445" rx="1.5" ry="3" transform="rotate(60 608 445)" stroke="#3f63f2" stroke-width="0.7" fill="#fff" />
<path d="M546 410 L566 398 L572 405 L553 420 Z" fill="#fff" stroke="none"/>
<polyline points="545.29,405.56 545.76,405.37 546.31,405.33 546.93,405.44 547.59,405.70 548.30,406.10 549.02,406.64 549.73,407.29 550.43,408.05 551.10,408.90 551.71,409.80 552.26,410.75 552.73,411.72 553.10,412.68 553.38,413.62 553.54,414.50 553.60,415.31 553.54,416.02 553.37,416.62 553.09,417.10 552.71,417.44" fill="none" stroke="#3f63f2" stroke-width="1.2" stroke-linecap="butt"/>
<polyline points="549.22,404.10 549.65,403.92 550.15,403.89 550.71,403.99 551.32,404.22 551.96,404.59 552.61,405.08 553.27,405.67 553.91,406.36 554.51,407.13 555.07,407.96 555.57,408.82 555.99,409.70 556.33,410.58 556.58,411.43 556.73,412.23 556.78,412.96 556.73,413.61 556.57,414.16 556.32,414.59 555.98,414.90" fill="none" stroke="#3f63f2" stroke-width="1.2" stroke-linecap="butt"/>
<polyline points="553.16,402.63 553.54,402.47 553.99,402.44 554.50,402.53 555.05,402.74 555.62,403.07 556.21,403.51 556.80,404.05 557.38,404.67 557.92,405.37 558.43,406.11 558.87,406.89 559.26,407.68 559.56,408.47 559.79,409.24 559.92,409.96 559.97,410.62 559.92,411.21 559.78,411.70 559.55,412.09 559.24,412.37" fill="none" stroke="#3f63f2" stroke-width="1.2" stroke-linecap="butt"/>
<polyline points="557.09,401.17 557.44,401.03 557.84,401.00 558.29,401.08 558.77,401.27 559.29,401.56 559.81,401.95 560.34,402.43 560.85,402.98 561.33,403.60 561.78,404.26 562.18,404.96 562.52,405.66 562.79,406.36 562.99,407.05 563.12,407.69 563.16,408.28 563.11,408.80 562.99,409.24 562.78,409.59 562.51,409.83" fill="none" stroke="#3f63f2" stroke-width="1.2" stroke-linecap="butt"/>
<polyline points="561.03,399.70 561.33,399.58 561.68,399.55 562.07,399.62 562.50,399.79 562.95,400.05 563.41,400.39 563.87,400.81 564.32,401.29 564.74,401.83 565.14,402.41 565.49,403.02 565.79,403.64 566.03,404.26 566.20,404.86 566.31,405.42 566.34,405.94 566.30,406.39 566.19,406.78 566.02,407.08 565.77,407.30" fill="none" stroke="#3f63f2" stroke-width="1.2" stroke-linecap="butt"/>
<polyline points="564.96,398.24 565.22,398.13 565.52,398.11 565.86,398.17 566.23,398.31 566.61,398.53 567.01,398.83 567.40,399.19 567.79,399.60 568.16,400.07 568.49,400.57 568.79,401.09 569.05,401.62 569.26,402.15 569.41,402.66 569.50,403.15 569.53,403.59 569.50,403.99 569.40,404.32 569.25,404.58 569.04,404.76" fill="none" stroke="#3f63f2" stroke-width="1.2" stroke-linecap="butt"/>
<ellipse cx="548.5" cy="412" rx="5.2" ry="7" transform="rotate(-32 548.5 412)" stroke="#3f63f2" stroke-width="1.2" fill="none" />
<ellipse cx="548.5" cy="412.5" rx="2.8" ry="4" transform="rotate(-32 548.5 412.5)" stroke="#3f63f2" stroke-width="1" fill="none" />
<path d="M543 409 l10 -6 M545 419 l24 -14 M552 404 l17 -4" stroke="#3f63f2" stroke-width="0.9" fill="none"/>
<path d="M542.9 422.7 Q 556 428 574.8 422.7 Q 586 416 587 408 Q 587 400 586 395.4" fill="none" stroke="#000" stroke-width="1.3"/>
<polygon points="572,423 606,443 605,444.5 574.5,425" fill="#000"/>
<line x1="574" y1="422.5" x2="606" y2="443" stroke="#000" stroke-width="0.8"/>
<rect x="876.5" y="318.5" width="66" height="39" fill="#ffff00" stroke="#222" stroke-width="1"/>
<text x="886.5" y="334" class="it">600 Nm</text><text x="886.5" y="348.6" class="it">440 ft.lb</text>
<text x="702" y="486.5" class="lb">70</text>
<text x="756.5" y="486.5" class="lb">20</text>
<text x="811" y="486.5" class="lb">10</text>
<text x="468.5" y="558" class="lb">210</text>
<text x="524" y="558" class="lb">240</text>
<text x="584" y="558" class="lb">90</text>
<text x="625.5" y="558" class="lb">100</text>
<text x="437" y="605" class="lb">200</text>
<text x="437" y="655" class="lb">220</text>
<text x="771" y="658" class="lb">50</text>
<text x="735.5" y="673.5" class="lb">80</text>
<text x="694" y="706" class="lb">30</text>
<text x="555" y="772" class="lb">80</text>
<text x="591.5" y="772" class="lb">230</text>
<text x="646" y="772" class="lb">60</text>
<line x1="718.7" y1="495.6" x2="743.4" y2="598.6" stroke="#000" stroke-width="0.9"/>
<line x1="766.5" y1="495.6" x2="768.2" y2="560.7" stroke="#000" stroke-width="0.9"/>
<line x1="484.4" y1="560.7" x2="512.4" y2="663" stroke="#000" stroke-width="0.9"/>
<line x1="484.4" y1="560.7" x2="522.3" y2="658" stroke="#000" stroke-width="0.9"/>
<line x1="538.2" y1="563.5" x2="532.5" y2="613" stroke="#000" stroke-width="0.9"/>
<line x1="538.2" y1="563.5" x2="548.7" y2="602.2" stroke="#000" stroke-width="0.9"/>
<line x1="592.4" y1="562.6" x2="595.5" y2="637.3" stroke="#000" stroke-width="0.9"/>
<line x1="457.8" y1="611.2" x2="509" y2="709.2" stroke="#000" stroke-width="0.9"/>
<line x1="453" y1="661.3" x2="466.2" y2="705.9" stroke="#000" stroke-width="0.9"/>
<line x1="453" y1="661.3" x2="481" y2="704.2" stroke="#000" stroke-width="0.9"/>
<line x1="752.4" y1="619.5" x2="770.5" y2="645.4" stroke="#000" stroke-width="0.9"/>
<line x1="732.8" y1="624.4" x2="740.5" y2="657.3" stroke="#000" stroke-width="0.9"/>
<line x1="695" y1="669.2" x2="699.2" y2="685.3" stroke="#000" stroke-width="0.9"/>
<line x1="563.6" y1="724" x2="563.6" y2="752" stroke="#000" stroke-width="0.9"/>
<line x1="588.3" y1="696" x2="603.2" y2="750.4" stroke="#000" stroke-width="0.9"/>
<line x1="609.8" y1="654.7" x2="646" y2="750.4" stroke="#000" stroke-width="0.9"/>
<line x1="623" y1="671.2" x2="646" y2="750.4" stroke="#000" stroke-width="0.9"/>
<line x1="636.2" y1="684.4" x2="646" y2="750.4" stroke="#000" stroke-width="0.9"/>
<line x1="553" y1="634" x2="556" y2="697" stroke="#000" stroke-width="0.9"/>
<line x1="556" y1="634" x2="559" y2="697" stroke="#000" stroke-width="0.9"/>
<ellipse cx="862" cy="529" rx="4" ry="6.6" transform="rotate(-30 862 529)" stroke="#3f63f2" stroke-width="0.8" fill="#fff" /><polygon points="793.20,561.28 858.70,523.28 865.30,534.72 799.80,572.72" fill="#fff" stroke="none"/><line x1="793.2" y1="561.28" x2="858.7" y2="523.28" stroke="#3f63f2" stroke-width="0.8"/><line x1="799.8" y1="572.72" x2="865.3" y2="534.72" stroke="#3f63f2" stroke-width="0.8"/><ellipse cx="796.5" cy="567" rx="4" ry="6.6" transform="rotate(-30 796.5 567)" stroke="#3f63f2" stroke-width="0.8" fill="#fff" />
<ellipse cx="901" cy="506" rx="5.5" ry="9.4" transform="rotate(-30 901 506)" stroke="#3f63f2" stroke-width="0.8" fill="#fff" /><polygon points="858.30,519.86 896.30,497.86 905.70,514.14 867.70,536.14" fill="#fff" stroke="none"/><line x1="858.3" y1="519.86" x2="896.3" y2="497.86" stroke="#3f63f2" stroke-width="0.8"/><line x1="867.7" y1="536.14" x2="905.7" y2="514.14" stroke="#3f63f2" stroke-width="0.8"/><ellipse cx="863" cy="528" rx="5.5" ry="9.4" transform="rotate(-30 863 528)" stroke="#3f63f2" stroke-width="0.8" fill="#fff" />
<polyline points="860.20,518.69 861.24,518.30 862.42,518.25 863.70,518.53 865.04,519.14 866.37,520.05 867.64,521.23 868.82,522.63 869.85,524.20 870.69,525.88 871.32,527.59 871.70,529.29 871.82,530.90 871.69,532.36 871.29,533.61 870.65,534.61 869.80,535.31" fill="none" stroke="#3f63f2" stroke-width="0.8" stroke-linecap="butt"/>
<polyline points="863.00,517.09 864.04,516.70 865.22,516.65 866.50,516.93 867.84,517.54 869.17,518.45 870.44,519.63 871.62,521.03 872.65,522.60 873.49,524.28 874.12,525.99 874.50,527.69 874.62,529.30 874.49,530.76 874.09,532.01 873.45,533.01 872.60,533.71" fill="none" stroke="#3f63f2" stroke-width="0.8" stroke-linecap="butt"/>
<polyline points="865.80,515.49 866.84,515.10 868.02,515.05 869.30,515.33 870.64,515.94 871.97,516.85 873.24,518.03 874.42,519.43 875.45,521.00 876.29,522.68 876.92,524.39 877.30,526.09 877.42,527.70 877.29,529.16 876.89,530.41 876.25,531.41 875.40,532.11" fill="none" stroke="#3f63f2" stroke-width="0.8" stroke-linecap="butt"/>
<polyline points="868.60,513.89 869.64,513.50 870.82,513.45 872.10,513.73 873.44,514.34 874.77,515.25 876.04,516.43 877.22,517.83 878.25,519.40 879.09,521.08 879.72,522.79 880.10,524.49 880.22,526.10 880.09,527.56 879.69,528.81 879.05,529.81 878.20,530.51" fill="none" stroke="#3f63f2" stroke-width="0.8" stroke-linecap="butt"/>
<polyline points="871.40,512.29 872.44,511.90 873.62,511.85 874.90,512.13 876.24,512.74 877.57,513.65 878.84,514.83 880.02,516.23 881.05,517.80 881.89,519.48 882.52,521.19 882.90,522.89 883.02,524.50 882.89,525.96 882.49,527.21 881.85,528.21 881.00,528.91" fill="none" stroke="#3f63f2" stroke-width="0.8" stroke-linecap="butt"/>
<polyline points="882.30,505.86 883.32,505.48 884.48,505.43 885.74,505.70 887.04,506.30 888.35,507.19 889.60,508.34 890.75,509.71 891.76,511.25 892.59,512.89 893.20,514.57 893.57,516.24 893.69,517.81 893.55,519.24 893.17,520.47 892.54,521.45 891.70,522.14" fill="none" stroke="#3f63f2" stroke-width="0.6" stroke-linecap="butt"/>
<ellipse cx="901" cy="506" rx="5" ry="8.6" transform="rotate(-30 901 506)" stroke="#3f63f2" stroke-width="0.7" fill="none" />
<polyline points="799.70,557.28 800.71,556.96 801.87,557.05 803.12,557.54 804.35,558.41 805.49,559.59 806.46,561.00 807.20,562.55 807.65,564.13 807.78,565.63 807.59,566.95 807.08,568.00 806.30,568.72" fill="none" stroke="#3f63f2" stroke-width="0.5" stroke-linecap="butt"/>
<line x1="821" y1="492.6" x2="836" y2="532.3" stroke="#000" stroke-width="0.9"/>
<line x1="841.2" y1="553" x2="855.5" y2="588.8" stroke="#000" stroke-width="0.9"/>
<ellipse cx="782" cy="575" rx="9" ry="14.5" transform="rotate(-30 782 575)" stroke="#3f63f2" stroke-width="0.8" fill="#fff" /><polygon points="760.75,569.44 774.75,562.44 789.25,587.56 775.25,594.56" fill="#fff" stroke="none"/><line x1="760.75" y1="569.44" x2="774.75" y2="562.44" stroke="#3f63f2" stroke-width="0.8"/><line x1="775.25" y1="594.56" x2="789.25" y2="587.56" stroke="#3f63f2" stroke-width="0.8"/><ellipse cx="768" cy="582" rx="9" ry="14.5" transform="rotate(-30 768 582)" stroke="#3f63f2" stroke-width="0.8" fill="#fff" />
<ellipse cx="768" cy="582" rx="7" ry="11.5" transform="rotate(-30 768 582)" stroke="#3f63f2" stroke-width="0.8" fill="#fff" /><polygon points="749.25,580.04 762.25,572.04 773.75,591.96 760.75,599.96" fill="#fff" stroke="none"/><line x1="749.25" y1="580.04" x2="762.25" y2="572.04" stroke="#3f63f2" stroke-width="0.8"/><line x1="760.75" y1="599.96" x2="773.75" y2="591.96" stroke="#3f63f2" stroke-width="0.8"/><ellipse cx="755" cy="590" rx="7" ry="11.5" transform="rotate(-30 755 590)" stroke="#3f63f2" stroke-width="0.8" fill="#fff" />
<polyline points="755.00,575.61 756.38,575.08 757.94,574.96 759.62,575.28 761.35,576.00 763.07,577.11 764.70,578.56 766.20,580.29 767.50,582.25 768.54,584.35 769.30,586.51 769.73,588.66 769.84,590.70 769.60,592.56 769.03,594.17 768.15,595.46 767.00,596.39" fill="none" stroke="#3f63f2" stroke-width="0.7" stroke-linecap="butt"/>
<polyline points="758.75,573.17 760.22,572.60 761.88,572.47 763.65,572.78 765.48,573.52 767.29,574.66 769.01,576.16 770.58,577.96 771.93,580.00 773.01,582.19 773.79,584.45 774.23,586.69 774.32,588.83 774.05,590.78 773.43,592.47 772.48,593.84 771.25,594.83" fill="none" stroke="#3f63f2" stroke-width="0.7" stroke-linecap="butt"/>
<ellipse cx="755" cy="590" rx="4.8" ry="7.5" transform="rotate(-30 755 590)" stroke="#3f63f2" stroke-width="0.7" fill="none" />
<ellipse cx="755" cy="590" rx="3" ry="5" transform="rotate(-30 755 590)" stroke="#3f63f2" stroke-width="0.7" fill="none" />
<ellipse cx="776" cy="568" rx="0.8" ry="0.8" transform="rotate(0 776 568)" stroke="#3f63f2" stroke-width="0.6" fill="none" />
<ellipse cx="779" cy="580" rx="0.8" ry="0.8" transform="rotate(0 779 580)" stroke="#3f63f2" stroke-width="0.6" fill="none" />
<ellipse cx="784" cy="585" rx="0.8" ry="0.8" transform="rotate(0 784 585)" stroke="#3f63f2" stroke-width="0.6" fill="none" />
<ellipse cx="781" cy="573" rx="0.8" ry="0.8" transform="rotate(0 781 573)" stroke="#3f63f2" stroke-width="0.6" fill="none" />
<ellipse cx="743.8" cy="603.2" rx="2.8" ry="4.3" transform="rotate(-25 743.8 603.2)" stroke="#ff0000" stroke-width="2" fill="none" />
<rect x="744.5" y="611" width="10.5" height="4.2" rx="2" fill="#fff" stroke="#3f63f2" stroke-width="0.8" transform="rotate(-32 749.8 613.1)"/>
<ellipse cx="725.8" cy="607.6" rx="10" ry="14.2" transform="rotate(-22 725.8 607.6)" stroke="#ff0000" stroke-width="2.8" fill="none" />
<path d="M666,579 C676,579 686,582 697,591 L708,596 C714,600 716,606 717,612 L720,650 L667,684 C660,683 652,680 646,675 L631,664 L629,655 L619,645 C614,640 611,636 611,630 C611,624 615,620 621,616 L628,601 C634,592 640,586 646,584 C652,580 659,579 666,579 Z" fill="#bebebe" stroke="#3a3a3a" stroke-width="0.9"/>
<path d="M646,585 C655,590 660,600 662,612 L699,593 M652,613 L705,597 M660,622 L717,612 M668,684 L668,660 M690,668 L716,652" fill="none" stroke="#444" stroke-width="0.7"/>
<path d="M 684 627 C 690 622 700 614 712 611 L 715 643 C 705 648 695 656 688 660 C 692 650 692 638 684 627 Z" fill="#b0b0b0" stroke="#444" stroke-width="0.8"/>
<ellipse cx="652" cy="652" rx="12" ry="17.5" transform="rotate(-30 652 652)" stroke="#333" stroke-width="0.9" fill="#c4c4c4" />
<ellipse cx="652" cy="652" rx="9" ry="13.5" transform="rotate(-30 652 652)" stroke="#666" stroke-width="0.6" fill="none" />
<path d="M646 640 l8 24 M650 638 l8 24 M655 638 l6 22" stroke="#777" stroke-width="0.5"/>
<ellipse cx="620" cy="632" rx="7" ry="10" transform="rotate(-30 620 632)" stroke="#333" stroke-width="0.9" fill="#9a9a9a" />
<ellipse cx="620" cy="632" rx="4.5" ry="7" transform="rotate(-30 620 632)" stroke="#555" stroke-width="0.7" fill="#cfcfcf" />
<ellipse cx="632" cy="625" rx="2" ry="2.8" transform="rotate(-30 632 625)" stroke="#444" stroke-width="0.7" fill="#a5a5a5" />
<ellipse cx="641" cy="610" rx="2" ry="2.8" transform="rotate(-30 641 610)" stroke="#444" stroke-width="0.7" fill="#a5a5a5" />
<ellipse cx="637" cy="647" rx="2" ry="2.8" transform="rotate(-30 637 647)" stroke="#444" stroke-width="0.7" fill="#a5a5a5" />
<ellipse cx="644" cy="679" rx="2" ry="2.8" transform="rotate(-30 644 679)" stroke="#444" stroke-width="0.7" fill="#a5a5a5" />
<ellipse cx="660" cy="634" rx="2" ry="2.8" transform="rotate(-30 660 634)" stroke="#444" stroke-width="0.7" fill="#a5a5a5" />
<ellipse cx="670" cy="667" rx="2" ry="2.8" transform="rotate(-30 670 667)" stroke="#444" stroke-width="0.7" fill="#a5a5a5" />
<ellipse cx="628" cy="654" rx="2" ry="2.8" transform="rotate(-30 628 654)" stroke="#444" stroke-width="0.7" fill="#a5a5a5" />
<ellipse cx="643" cy="613" rx="3.5" ry="2.2" transform="rotate(-20 643 613)" stroke="#333" stroke-width="0.8" fill="#888" />
<path d="M633 577 C633 571 643 571 644 577 L642 583 L636 584 Z" fill="#f2f2f2" stroke="#555" stroke-width="0.7"/>
<path d="M636 576 l4 -2 M638 573 v6" stroke="#666" stroke-width="0.6"/>
<line x1="637.4" y1="562.6" x2="637.4" y2="571.6" stroke="#000" stroke-width="0.9"/>
<line x1="638.5" y1="584" x2="643.2" y2="613" stroke="#000" stroke-width="0.9"/>
<line x1="615.4" y1="651" x2="633.4" y2="639.8" stroke="#000" stroke-width="1.1"/>
<rect x="606.9" y="650.4" width="11" height="5.2" rx="2.4" fill="#fff" stroke="#3f63f2" stroke-width="0.8" transform="rotate(-30 612.4 653)"/>
<line x1="628" y1="671.4" x2="662.8" y2="651" stroke="#000" stroke-width="1.1"/>
<rect x="619.5" y="670.8" width="11" height="5.2" rx="2.4" fill="#fff" stroke="#3f63f2" stroke-width="0.8" transform="rotate(-30 625 673.4)"/>
<line x1="639.9" y1="681.2" x2="662.8" y2="667.8" stroke="#000" stroke-width="1.1"/>
<rect x="631.4" y="680.6" width="11" height="5.2" rx="2.4" fill="#fff" stroke="#3f63f2" stroke-width="0.8" transform="rotate(-30 636.9 683.2)"/>
<ellipse cx="597.7" cy="646.8" rx="6" ry="10" transform="rotate(-20 597.7 646.8)" stroke="#ff0000" stroke-width="2.6" fill="none" />
<path d="M515.6 620.6 Q 528 636 545 633.5 Q 572 628 569.6 601" fill="none" stroke="#000" stroke-width="1.2"/>
<path d="M520 612 L533 606 L542 610 L542 622 L533 626 L521 624 M522 617 L532 613 M522 621 L533 617 M533 606 L533 626" fill="none" stroke="#ff0000" stroke-width="0.9"/>
<path d="M545 604 L556 598 L564 601 L563 613 L556 615 L548 613 M556 598 L556 615 M558 606 c3 -2 5 1 3 3" fill="none" stroke="#ff0000" stroke-width="0.9"/>
<path d="M459.8 714.2 Q 466 721 472.4 720.5 Q 484 719 485.9 707.9" fill="none" stroke="#000" stroke-width="1.1"/>
<line x1="482.3" y1="717.8" x2="489.5" y2="723.2" stroke="#000" stroke-width="1.1"/>
<path d="M466 709 l6 -3 l4 2 l-1 6 l-5 1 z M474 705 l5 -3 l4 2 l-1 6 l-4 1 z" fill="#fff" stroke="#ff0000" stroke-width="1"/><rect x="470" y="708" width="2.5" height="5" fill="#ff0000"/><rect x="478" y="704" width="2.5" height="5" fill="#ff0000"/>
<ellipse cx="610" cy="676" rx="8.5" ry="11.5" transform="rotate(-30 610 676)" stroke="#ff0000" stroke-width="0.8" fill="#fff" /><polygon points="570.25,684.54 604.25,666.04 615.75,685.96 581.75,704.46" fill="#fff" stroke="none"/><line x1="570.25" y1="684.54" x2="604.25" y2="666.04" stroke="#ff0000" stroke-width="0.8"/><line x1="581.75" y1="704.46" x2="615.75" y2="685.96" stroke="#ff0000" stroke-width="0.8"/><ellipse cx="576" cy="694.5" rx="8.5" ry="11.5" transform="rotate(-30 576 694.5)" stroke="#ff0000" stroke-width="0.8" fill="#fff" />
<ellipse cx="576" cy="694.5" rx="5.5" ry="8" transform="rotate(-30 576 694.5)" stroke="#ff0000" stroke-width="0.7" fill="none" />
<polyline points="586.20,674.95 587.76,674.31 589.49,674.07 591.32,674.26 593.17,674.86 594.97,675.84 596.66,677.18 598.17,678.82 599.45,680.70 600.44,682.74 601.10,684.87 601.41,687.01 601.37,689.06 600.96,690.96 600.21,692.64 599.14,694.01 597.80,695.05" fill="none" stroke="#ff0000" stroke-width="0.6" stroke-linecap="butt"/>
<polyline points="589.40,673.15 590.96,672.51 592.69,672.27 594.52,672.46 596.37,673.06 598.17,674.04 599.86,675.38 601.37,677.02 602.65,678.90 603.64,680.94 604.30,683.07 604.61,685.21 604.57,687.26 604.16,689.16 603.41,690.84 602.34,692.21 601.00,693.25" fill="none" stroke="#ff0000" stroke-width="0.6" stroke-linecap="butt"/>
<polyline points="592.60,671.35 594.16,670.71 595.89,670.47 597.72,670.66 599.57,671.26 601.37,672.24 603.06,673.58 604.57,675.22 605.85,677.10 606.84,679.14 607.50,681.27 607.81,683.41 607.77,685.46 607.36,687.36 606.61,689.04 605.54,690.41 604.20,691.45" fill="none" stroke="#ff0000" stroke-width="0.6" stroke-linecap="butt"/>
<polyline points="595.80,669.55 597.36,668.91 599.09,668.67 600.92,668.86 602.77,669.46 604.57,670.44 606.26,671.78 607.77,673.42 609.05,675.30 610.04,677.34 610.70,679.47 611.01,681.61 610.97,683.66 610.56,685.56 609.81,687.24 608.74,688.61 607.40,689.65" fill="none" stroke="#ff0000" stroke-width="0.6" stroke-linecap="butt"/>
<polyline points="599.00,667.75 600.56,667.11 602.29,666.87 604.12,667.06 605.97,667.66 607.77,668.64 609.46,669.98 610.97,671.62 612.25,673.50 613.24,675.54 613.90,677.67 614.21,679.81 614.17,681.86 613.76,683.76 613.01,685.44 611.94,686.81 610.60,687.85" fill="none" stroke="#ff0000" stroke-width="0.6" stroke-linecap="butt"/>
<ellipse cx="553" cy="707" rx="11.5" ry="16" transform="rotate(-30 553 707)" stroke="#ff0000" stroke-width="0.8" fill="#fff" /><polygon points="511.00,714.64 545.00,693.14 561.00,720.86 527.00,742.36" fill="#fff" stroke="none"/><line x1="511.0" y1="714.64" x2="545.0" y2="693.14" stroke="#ff0000" stroke-width="0.8"/><line x1="527.0" y1="742.36" x2="561.0" y2="720.86" stroke="#ff0000" stroke-width="0.8"/><ellipse cx="519" cy="728.5" rx="11.5" ry="16" transform="rotate(-30 519 728.5)" stroke="#ff0000" stroke-width="0.8" fill="#fff" />
<ellipse cx="519" cy="728.5" rx="8" ry="12" transform="rotate(-30 519 728.5)" stroke="#ff0000" stroke-width="0.7" fill="none" />
<ellipse cx="519" cy="728.5" rx="5.5" ry="9" transform="rotate(-30 519 728.5)" stroke="#ff0000" stroke-width="0.7" fill="none" />
<polyline points="521.95,707.56 524.06,706.69 526.41,706.40 528.89,706.68 531.41,707.54 533.88,708.93 536.20,710.81 538.28,713.09 540.05,715.70 541.42,718.53 542.36,721.48 542.83,724.42 542.80,727.26 542.27,729.87 541.28,732.16 539.86,734.04 538.05,735.44" fill="none" stroke="#ff0000" stroke-width="0.7" stroke-linecap="butt"/>
<polyline points="525.55,705.36 527.66,704.49 530.01,704.20 532.49,704.48 535.01,705.34 537.48,706.73 539.80,708.61 541.88,710.89 543.65,713.50 545.02,716.33 545.96,719.28 546.43,722.22 546.40,725.06 545.87,727.67 544.88,729.96 543.46,731.84 541.65,733.24" fill="none" stroke="#ff0000" stroke-width="0.7" stroke-linecap="butt"/>
<polyline points="529.15,703.16 531.26,702.29 533.61,702.00 536.09,702.28 538.61,703.14 541.08,704.53 543.40,706.41 545.48,708.69 547.25,711.30 548.62,714.13 549.56,717.08 550.03,720.02 550.00,722.86 549.47,725.47 548.48,727.76 547.06,729.64 545.25,731.04" fill="none" stroke="#ff0000" stroke-width="0.7" stroke-linecap="butt"/>
<polyline points="532.75,700.96 534.86,700.09 537.21,699.80 539.69,700.08 542.21,700.94 544.68,702.33 547.00,704.21 549.08,706.49 550.85,709.10 552.22,711.93 553.16,714.88 553.63,717.82 553.60,720.66 553.07,723.27 552.08,725.56 550.66,727.44 548.85,728.84" fill="none" stroke="#ff0000" stroke-width="0.7" stroke-linecap="butt"/>
<polyline points="536.35,698.76 538.46,697.89 540.81,697.60 543.29,697.88 545.81,698.74 548.28,700.13 550.60,702.01 552.68,704.29 554.45,706.90 555.82,709.73 556.76,712.68 557.23,715.62 557.20,718.46 556.67,721.07 555.68,723.36 554.26,725.24 552.45,726.64" fill="none" stroke="#ff0000" stroke-width="0.7" stroke-linecap="butt"/>
<polyline points="539.95,696.56 542.06,695.69 544.41,695.40 546.89,695.68 549.41,696.54 551.88,697.93 554.20,699.81 556.28,702.09 558.05,704.70 559.42,707.53 560.36,710.48 560.83,713.42 560.80,716.26 560.27,718.87 559.28,721.16 557.86,723.04 556.05,724.44" fill="none" stroke="#ff0000" stroke-width="0.7" stroke-linecap="butt"/>
<ellipse cx="556" cy="706" rx="4" ry="7" transform="rotate(-30 556 706)" stroke="#ff0000" stroke-width="0.8" fill="#fff" />
<ellipse cx="558.8" cy="702.5" rx="9.5" ry="14.5" transform="rotate(-25 558.8 702.5)" stroke="#ff0000" stroke-width="2.8" fill="none" />
<ellipse cx="521" cy="680" rx="11.5" ry="15.5" transform="rotate(-25 521 680)" stroke="#ff0000" stroke-width="2.6" fill="none" />
<ellipse cx="530.9" cy="675.5" rx="11.5" ry="15.5" transform="rotate(-25 530.9 675.5)" stroke="#ff0000" stroke-width="2.6" fill="none" />
<path d="M526 694 v8 M536 688 v8" stroke="#000" stroke-width="1.6"/><path d="M523 700 l3 4 l3 -4z M533 694 l3 4 l3 -4z" fill="#000"/>
<ellipse cx="503" cy="736.5" rx="12" ry="15" transform="rotate(-30 503 736.5)" stroke="#ff0000" stroke-width="0.8" fill="#fff" /><polygon points="490.10,726.41 495.50,723.51 510.50,749.49 505.10,752.39" fill="#fff" stroke="none"/><line x1="490.1" y1="726.41" x2="495.5" y2="723.51" stroke="#ff0000" stroke-width="0.8"/><line x1="505.1" y1="752.39" x2="510.5" y2="749.49" stroke="#ff0000" stroke-width="0.8"/><ellipse cx="497.6" cy="739.4" rx="12" ry="15" transform="rotate(-30 497.6 739.4)" stroke="#ff0000" stroke-width="0.8" fill="#fff" />
<ellipse cx="497.6" cy="739.4" rx="9" ry="12" transform="rotate(-30 497.6 739.4)" stroke="#ff0000" stroke-width="0.7" fill="none" />
<ellipse cx="497.6" cy="739.4" rx="6.5" ry="9.5" transform="rotate(-30 497.6 739.4)" stroke="#ff0000" stroke-width="0.7" fill="none" />
<polyline points="492.50,725.01 494.67,724.09 497.05,723.70 499.54,723.87 502.05,724.57 504.47,725.79 506.73,727.49 508.73,729.58 510.39,732.00 511.66,734.65 512.47,737.43 512.81,740.23 512.65,742.94 512.01,745.47 510.91,747.71 509.38,749.57 507.50,750.99" fill="none" stroke="#ff0000" stroke-width="0.7" stroke-linecap="butt"/>
<line x1="814.5" y1="617.5" x2="814.5" y2="636" stroke="#000" stroke-width="1"/>
<line x1="934" y1="617.5" x2="934" y2="636" stroke="#000" stroke-width="1"/>
<line x1="817" y1="621.7" x2="931" y2="621.7" stroke="#000" stroke-width="0.9"/>
<path d="M815 621.7 l7 -2.5 v5z M933.5 621.7 l-7 -2.5 v5z" fill="#000"/>
<text x="849" y="602" style="font-family:Liberation Sans;font-style:italic;font-size:11px">13.17” mini</text>
<text x="841.5" y="617" class="lg">最短334,7mm</text>
<rect x="814.5" y="634" width="119.5" height="20.5" fill="#ff7f00" stroke="#222" stroke-width="0.9"/>
<rect x="898.5" y="631.5" width="16" height="25.5" fill="#ff7f00" stroke="#222" stroke-width="0.9"/>
<path d="M902.5 631.5v25.5M906.5 631.5v25.5M910.5 631.5v25.5" stroke="#222" stroke-width="0.8"/>
<path d="M811 644 H 937" stroke="#111" stroke-width="0.8" stroke-dasharray="14,3,2,3"/>
<text x="746.5" y="693.8" style="font-family:Liberation Sans;font-weight:bold;font-size:11px">PARTS TO CHANGE</text>
<text x="746.5" y="705.5" class="lg">更换零件</text>
<rect x="746.5" y="719.3" width="32.5" height="12.7" fill="#ff8000"/>
<text x="791.5" y="724.2" style="font-family:Liberation Sans;font-weight:bold;font-size:11px">Depending on applications.</text>
<text x="791.5" y="735.5" class="lg">根据实际应用而定</text>
<rect x="746.5" y="747.4" width="32.5" height="12.7" fill="#009a9a"/>
<text x="791.5" y="752.3" style="font-family:Liberation Sans;font-weight:bold;font-size:11px">Every 100 hours.</text>
<text x="791.5" y="763.6" class="lg">每100小时</text>
<rect x="746.5" y="775.5" width="32.5" height="12.7" fill="#008000"/>
<text x="791.5" y="780.4" style="font-family:Liberation Sans;font-weight:bold;font-size:11px">Every 400 hours.</text>
<text x="791.5" y="791.7" class="lg">每400小时</text>
<rect x="746.5" y="803.6" width="32.5" height="12.7" fill="#ff0000"/>
<text x="791.5" y="808.5" style="font-family:Liberation Sans;font-weight:bold;font-size:11px">Every 800 hours.</text>
<text x="791.5" y="819.8" class="lg">每800小时</text>
<rect x="746.5" y="831.7" width="32.5" height="12.7" fill="#3355ff"/>
<text x="791.5" y="836.6" style="font-family:Liberation Sans;font-weight:bold;font-size:11px">Every 1600 hours.</text>
<text x="791.5" y="847.9" class="lg">每1600小时</text>
<rect x="746.5" y="859.8" width="32.5" height="12.7" fill="#808080"/>
<text x="791.5" y="864.7" style="font-family:Liberation Sans;font-weight:bold;font-size:11px">Long term, only if damaged.</text>
<text x="791.5" y="876.0" class="lg">长期使用，只有损坏时更换</text>
</svg>
<!--/DIAG-->
<div id="tbl">
<div class="a" style="left:961px;top:284.00px;width:539px;height:18.8px;background:#dedede"></div>
<div class="a" style="left:961px;top:322.00px;width:539px;height:18.8px;background:#dedede"></div>
<div class="a" style="left:961px;top:360.00px;width:539px;height:18.8px;background:#dedede"></div>
<div class="a" style="left:961px;top:398.00px;width:539px;height:18.8px;background:#dedede"></div>
<div class="a" style="left:961px;top:436.00px;width:539px;height:18.8px;background:#dedede"></div>
<div class="a" style="left:961px;top:474.00px;width:539px;height:18.8px;background:#dedede"></div>
<div class="a" style="left:961px;top:474px;width:120px;height:18.8px;overflow:hidden"><div class="pt" style="left:7px;top:10px;font-size:26px;line-height:26px;font-weight:bold;color:#ececec;letter-spacing:3px">TECH</div></div>
<div class="a" style="left:961px;top:512.00px;width:539px;height:18.8px;background:#dedede"></div>
<div class="a" style="left:961px;top:550.00px;width:539px;height:18.8px;background:#dedede"></div>
<div class="a" style="left:961px;top:588.00px;width:539px;height:18.8px;background:#dedede"></div>
<div class="a" style="left:961px;top:626.00px;width:539px;height:18.8px;background:#dedede"></div>
<div class="a" style="left:961px;top:664.00px;width:539px;height:18.8px;background:#dedede"></div>
<div class="a" style="left:961px;top:702.00px;width:539px;height:19.6px;background:#dedede"></div>
<div class="pt" style="left:1475.00px;top:161.88px;font-size:15.5px;line-height:15.5px;font-weight:bold">1.2</div>
<div class="pt" style="left:884.20px;width:200px;text-align:center;top:175.69px;font-size:11px;line-height:11px;font-weight:bold">Item</div>
<div class="pt" style="left:944.60px;width:200px;text-align:center;top:175.69px;font-size:11px;line-height:11px;font-weight:bold">CPN</div>
<div class="pt" style="left:1004.70px;width:200px;text-align:center;top:175.69px;font-size:11px;line-height:11px;font-weight:bold">Qty</div>
<div class="pt" style="left:883.50px;width:200px;text-align:center;top:189.6px;font-size:14px;line-height:14px;-webkit-text-stroke:0.2px #111;">项目</div>
<div class="pt" style="left:944.50px;width:200px;text-align:center;top:189.6px;font-size:14px;line-height:14px;-webkit-text-stroke:0.2px #111;">品号</div>
<div class="pt" style="left:1003.10px;width:200px;text-align:center;top:189.6px;font-size:14px;line-height:14px;-webkit-text-stroke:0.2px #111;">数量</div>
<div class="a" style="left:944px;top:208px;width:555px;height:2px;background:#6e6e6e"></div>
<div class="pt" style="left:1137.00px;top:225.73px;font-size:14.5px;line-height:14.5px;font-weight:bold">Motor part</div>
<div class="pt" style="-webkit-text-stroke:0.25px #111;left:1322.5px;top:226.65px;font-size:14px;line-height:14px;">马达部</div>
<div class="pt" style="right:924.50px;top:267.31px;font-size:10.5px;line-height:10.5px;">10</div>
<div class="pt" style="left:1013.00px;top:266.50px;font-size:13px;line-height:13px;transform:scaleX(1.145);transform-origin:0 0">86333838</div>
<div class="pt" style="left:1014.00px;width:200px;text-align:center;top:267.31px;font-size:10.5px;line-height:10.5px;">1</div>
<div class="pt" style="left:1137.00px;top:266.89px;font-size:11px;line-height:11px;">Striking piston</div>
<div class="pt" style="-webkit-text-stroke:0.25px #111;left:1322.5px;top:266.89px;font-size:11px;line-height:11px;">冲击活塞</div>
<div class="pt" style="right:924.50px;top:286.26px;font-size:10.5px;line-height:10.5px;">20</div>
<div class="pt" style="left:1013.00px;top:285.45px;font-size:13px;line-height:13px;transform:scaleX(1.145);transform-origin:0 0">86334299</div>
<div class="pt" style="left:1014.00px;width:200px;text-align:center;top:286.26px;font-size:10.5px;line-height:10.5px;">1</div>
<div class="pt" style="left:1137.00px;top:285.84px;font-size:11px;line-height:11px;">Down cylinder</div>
<div class="pt" style="-webkit-text-stroke:0.25px #111;left:1322.5px;top:285.84px;font-size:11px;line-height:11px;">下缸体</div>
<div class="pt" style="right:924.50px;top:305.21px;font-size:10.5px;line-height:10.5px;">30</div>
<div class="pt" style="left:1013.00px;top:304.40px;font-size:13px;line-height:13px;transform:scaleX(1.145);transform-origin:0 0">86386794</div>
<div class="pt" style="left:1014.00px;width:200px;text-align:center;top:305.21px;font-size:10.5px;line-height:10.5px;">1</div>
<div class="pt" style="left:1137.00px;top:304.79px;font-size:11px;line-height:11px;">Motor body</div>
<div class="pt" style="-webkit-text-stroke:0.25px #111;left:1322.5px;top:304.79px;font-size:11px;line-height:11px;">马达壳体</div>
<div class="pt" style="right:924.50px;top:324.16px;font-size:10.5px;line-height:10.5px;">40</div>
<div class="pt" style="left:1013.00px;top:323.35px;font-size:13px;line-height:13px;transform:scaleX(1.145);transform-origin:0 0">86223476</div>
<div class="pt" style="left:1014.00px;width:200px;text-align:center;top:324.16px;font-size:10.5px;line-height:10.5px;">1</div>
<div class="pt" style="left:1137.00px;top:323.74px;font-size:11px;line-height:11px;">Spring</div>
<div class="pt" style="-webkit-text-stroke:0.25px #111;left:1322.5px;top:323.74px;font-size:11px;line-height:11px;">弹簧</div>
<div class="pt" style="right:924.50px;top:343.11px;font-size:10.5px;line-height:10.5px;">50</div>
<div class="pt" style="left:1013.00px;top:342.30px;font-size:13px;line-height:13px;transform:scaleX(1.145);transform-origin:0 0">86223419</div>
<div class="pt" style="left:1014.00px;width:200px;text-align:center;top:343.11px;font-size:10.5px;line-height:10.5px;">1</div>
<div class="pt" style="left:1137.00px;top:342.69px;font-size:11px;line-height:11px;">Pin</div>
<div class="pt" style="-webkit-text-stroke:0.25px #111;left:1322.5px;top:342.69px;font-size:11px;line-height:11px;">销</div>
<div class="pt" style="right:924.50px;top:362.06px;font-size:10.5px;line-height:10.5px;">60</div>
<div class="pt" style="left:1013.00px;top:361.25px;font-size:13px;line-height:13px;transform:scaleX(1.145);transform-origin:0 0">86322518</div>
<div class="pt" style="left:1014.00px;width:200px;text-align:center;top:362.06px;font-size:10.5px;line-height:10.5px;">3</div>
<div class="pt" style="left:1137.00px;top:361.64px;font-size:11px;line-height:11px;">Valve</div>
<div class="pt" style="-webkit-text-stroke:0.25px #111;left:1322.5px;top:361.64px;font-size:11px;line-height:11px;">阀</div>
<div class="pt" style="right:924.50px;top:381.01px;font-size:10.5px;line-height:10.5px;">70</div>
<div class="pt" style="left:1013.00px;top:380.20px;font-size:13px;line-height:13px;transform:scaleX(1.145);transform-origin:0 0">86570447</div>
<div class="pt" style="left:1014.00px;width:200px;text-align:center;top:381.01px;font-size:10.5px;line-height:10.5px;">1</div>
<div class="pt" style="left:1137.00px;top:380.59px;font-size:11px;line-height:11px;">Tight seal</div>
<div class="pt" style="-webkit-text-stroke:0.25px #111;left:1322.5px;top:380.59px;font-size:11px;line-height:11px;">密封环</div>
<div class="a" style="left:952.2px;top:383.90px;width:5.2px;height:5.2px;border-radius:50%;background:#000"></div>
<div class="pt" style="right:924.50px;top:399.96px;font-size:10.5px;line-height:10.5px;">80</div>
<div class="pt" style="left:1013.00px;top:399.15px;font-size:13px;line-height:13px;transform:scaleX(1.145);transform-origin:0 0">86238201</div>
<div class="pt" style="left:1014.00px;width:200px;text-align:center;top:399.96px;font-size:10.5px;line-height:10.5px;">2</div>
<div class="pt" style="left:1137.00px;top:399.54px;font-size:11px;line-height:11px;">O’ring</div>
<div class="pt" style="-webkit-text-stroke:0.25px #111;left:1322.5px;top:399.54px;font-size:11px;line-height:11px;">O型圈</div>
<div class="a" style="left:952.2px;top:402.85px;width:5.2px;height:5.2px;border-radius:50%;background:#000"></div>
<div class="pt" style="right:924.50px;top:418.91px;font-size:10.5px;line-height:10.5px;">90</div>
<div class="pt" style="left:1013.00px;top:418.10px;font-size:13px;line-height:13px;transform:scaleX(1.145);transform-origin:0 0">86292786</div>
<div class="pt" style="left:1014.00px;width:200px;text-align:center;top:418.91px;font-size:10.5px;line-height:10.5px;">1</div>
<div class="pt" style="left:1137.00px;top:418.49px;font-size:11px;line-height:11px;">O’ring</div>
<div class="pt" style="-webkit-text-stroke:0.25px #111;left:1322.5px;top:418.49px;font-size:11px;line-height:11px;">O型圈</div>
<div class="a" style="left:952.2px;top:421.80px;width:5.2px;height:5.2px;border-radius:50%;background:#000"></div>
<div class="pt" style="right:924.50px;top:437.86px;font-size:10.5px;line-height:10.5px;">100</div>
<div class="pt" style="left:1013.00px;top:437.05px;font-size:13px;line-height:13px;transform:scaleX(1.145);transform-origin:0 0">86249265</div>
<div class="pt" style="left:1014.00px;width:200px;text-align:center;top:437.86px;font-size:10.5px;line-height:10.5px;">1</div>
<div class="pt" style="left:1137.00px;top:437.44px;font-size:11px;line-height:11px;">Plastic plug</div>
<div class="pt" style="-webkit-text-stroke:0.25px #111;left:1322.5px;top:437.44px;font-size:11px;line-height:11px;">塑料堵</div>
<div class="pt" style="right:924.50px;top:456.81px;font-size:10.5px;line-height:10.5px;">110</div>
<div class="pt" style="left:1013.00px;top:456.00px;font-size:13px;line-height:13px;transform:scaleX(1.145);transform-origin:0 0">86313053</div>
<div class="pt" style="left:1014.00px;width:200px;text-align:center;top:456.81px;font-size:10.5px;line-height:10.5px;">1</div>
<div class="pt" style="left:1137.00px;top:456.39px;font-size:11px;line-height:11px;">Cover</div>
<div class="pt" style="-webkit-text-stroke:0.25px #111;left:1322.5px;top:456.39px;font-size:11px;line-height:11px;">盖</div>
<div class="pt" style="right:924.50px;top:475.76px;font-size:10.5px;line-height:10.5px;">120</div>
<div class="pt" style="left:1013.00px;top:474.95px;font-size:13px;line-height:13px;transform:scaleX(1.145);transform-origin:0 0">86222668</div>
<div class="pt" style="left:1014.00px;width:200px;text-align:center;top:475.76px;font-size:10.5px;line-height:10.5px;">1</div>
<div class="pt" style="left:1137.00px;top:475.34px;font-size:11px;line-height:11px;">O’ring</div>
<div class="pt" style="-webkit-text-stroke:0.25px #111;left:1322.5px;top:475.34px;font-size:11px;line-height:11px;">O型圈</div>
<div class="a" style="left:952.2px;top:478.65px;width:5.2px;height:5.2px;border-radius:50%;background:#000"></div>
<div class="pt" style="right:924.50px;top:494.71px;font-size:10.5px;line-height:10.5px;">130</div>
<div class="pt" style="left:1013.00px;top:493.90px;font-size:13px;line-height:13px;transform:scaleX(1.145);transform-origin:0 0">86344116</div>
<div class="pt" style="left:1014.00px;width:200px;text-align:center;top:494.71px;font-size:10.5px;line-height:10.5px;">1</div>
<div class="pt" style="left:1137.00px;top:494.29px;font-size:11px;line-height:11px;">Bearing holder plate</div>
<div class="pt" style="-webkit-text-stroke:0.25px #111;left:1322.5px;top:494.29px;font-size:11px;line-height:11px;">轴承座</div>
<div class="pt" style="right:924.50px;top:513.66px;font-size:10.5px;line-height:10.5px;">140</div>
<div class="pt" style="left:1013.00px;top:512.85px;font-size:13px;line-height:13px;transform:scaleX(1.145);transform-origin:0 0">86223559</div>
<div class="pt" style="left:1014.00px;width:200px;text-align:center;top:513.66px;font-size:10.5px;line-height:10.5px;">1</div>
<div class="pt" style="left:1137.00px;top:513.24px;font-size:11px;line-height:11px;">Ball bearing</div>
<div class="pt" style="-webkit-text-stroke:0.25px #111;left:1322.5px;top:513.24px;font-size:11px;line-height:11px;">球轴承</div>
<div class="pt" style="right:924.50px;top:532.61px;font-size:10.5px;line-height:10.5px;">150</div>
<div class="pt" style="left:1013.00px;top:531.80px;font-size:13px;line-height:13px;transform:scaleX(1.145);transform-origin:0 0">86344199</div>
<div class="pt" style="left:1014.00px;width:200px;text-align:center;top:532.61px;font-size:10.5px;line-height:10.5px;">2</div>
<div class="pt" style="left:1137.00px;top:532.19px;font-size:11px;line-height:11px;">Distribution plate</div>
<div class="pt" style="-webkit-text-stroke:0.25px #111;left:1322.5px;top:532.19px;font-size:11px;line-height:11px;">配油盘</div>
<div class="pt" style="right:924.50px;top:551.56px;font-size:10.5px;line-height:10.5px;">160</div>
<div class="pt" style="left:1013.00px;top:550.75px;font-size:13px;line-height:13px;transform:scaleX(1.145);transform-origin:0 0">86261344</div>
<div class="pt" style="left:1014.00px;width:200px;text-align:center;top:551.56px;font-size:10.5px;line-height:10.5px;">2</div>
<div class="pt" style="left:1137.00px;top:551.14px;font-size:11px;line-height:11px;">O’ring</div>
<div class="pt" style="-webkit-text-stroke:0.25px #111;left:1322.5px;top:551.14px;font-size:11px;line-height:11px;">O型圈</div>
<div class="a" style="left:952.2px;top:554.45px;width:5.2px;height:5.2px;border-radius:50%;background:#000"></div>
<div class="pt" style="right:924.50px;top:570.51px;font-size:10.5px;line-height:10.5px;">170</div>
<div class="pt" style="left:1013.00px;top:569.70px;font-size:13px;line-height:13px;transform:scaleX(1.145);transform-origin:0 0">86632296</div>
<div class="pt" style="left:1014.00px;width:200px;text-align:center;top:570.51px;font-size:10.5px;line-height:10.5px;">1</div>
<div class="pt" style="left:1137.00px;top:570.09px;font-size:11px;line-height:11px;">Cartridge (type 043)</div>
<div class="pt" style="-webkit-text-stroke:0.25px #111;left:1322.5px;top:570.09px;font-size:11px;line-height:11px;">043马达芯</div>
<div class="pt" style="right:924.50px;top:589.46px;font-size:10.5px;line-height:10.5px;">180</div>
<div class="pt" style="left:1013.00px;top:588.65px;font-size:13px;line-height:13px;transform:scaleX(1.145);transform-origin:0 0">86318516</div>
<div class="pt" style="left:1014.00px;width:200px;text-align:center;top:589.46px;font-size:10.5px;line-height:10.5px;">2</div>
<div class="pt" style="left:1137.00px;top:589.04px;font-size:11px;line-height:11px;">Pin</div>
<div class="pt" style="-webkit-text-stroke:0.25px #111;left:1322.5px;top:589.04px;font-size:11px;line-height:11px;">销</div>
<div class="pt" style="right:924.50px;top:608.41px;font-size:10.5px;line-height:10.5px;">190</div>
<div class="pt" style="left:1013.00px;top:607.60px;font-size:13px;line-height:13px;transform:scaleX(1.145);transform-origin:0 0">86221918</div>
<div class="pt" style="left:1014.00px;width:200px;text-align:center;top:608.41px;font-size:10.5px;line-height:10.5px;">2</div>
<div class="pt" style="left:1137.00px;top:607.99px;font-size:11px;line-height:11px;">O’ring</div>
<div class="pt" style="-webkit-text-stroke:0.25px #111;left:1322.5px;top:607.99px;font-size:11px;line-height:11px;">O型圈</div>
<div class="a" style="left:952.2px;top:611.30px;width:5.2px;height:5.2px;border-radius:50%;background:#000"></div>
<div class="pt" style="right:924.50px;top:627.36px;font-size:10.5px;line-height:10.5px;">200</div>
<div class="pt" style="left:1013.00px;top:626.55px;font-size:13px;line-height:13px;transform:scaleX(1.145);transform-origin:0 0">86334109</div>
<div class="pt" style="left:1014.00px;width:200px;text-align:center;top:627.36px;font-size:10.5px;line-height:10.5px;">1</div>
<div class="pt" style="left:1137.00px;top:626.94px;font-size:11px;line-height:11px;">Thrust lining</div>
<div class="pt" style="-webkit-text-stroke:0.25px #111;left:1322.5px;top:626.94px;font-size:11px;line-height:11px;">止动活塞套</div>
<div class="pt" style="right:924.50px;top:646.31px;font-size:10.5px;line-height:10.5px;">210</div>
<div class="pt" style="left:1013.00px;top:645.50px;font-size:13px;line-height:13px;transform:scaleX(1.145);transform-origin:0 0">86238201</div>
<div class="pt" style="left:1014.00px;width:200px;text-align:center;top:646.31px;font-size:10.5px;line-height:10.5px;">2</div>
<div class="pt" style="left:1137.00px;top:645.89px;font-size:11px;line-height:11px;">O’ring</div>
<div class="pt" style="-webkit-text-stroke:0.25px #111;left:1322.5px;top:645.89px;font-size:11px;line-height:11px;">O型圈</div>
<div class="a" style="left:952.2px;top:649.20px;width:5.2px;height:5.2px;border-radius:50%;background:#000"></div>
<div class="pt" style="right:924.50px;top:665.26px;font-size:10.5px;line-height:10.5px;">220</div>
<div class="pt" style="left:1013.00px;top:664.45px;font-size:13px;line-height:13px;transform:scaleX(1.145);transform-origin:0 0">86300936</div>
<div class="pt" style="left:1014.00px;width:200px;text-align:center;top:665.26px;font-size:10.5px;line-height:10.5px;">2</div>
<div class="pt" style="left:1137.00px;top:664.84px;font-size:11px;line-height:11px;">Rod joint</div>
<div class="pt" style="-webkit-text-stroke:0.25px #111;left:1322.5px;top:664.84px;font-size:11px;line-height:11px;">密封</div>
<div class="a" style="left:952.2px;top:668.15px;width:5.2px;height:5.2px;border-radius:50%;background:#000"></div>
<div class="pt" style="right:924.50px;top:684.21px;font-size:10.5px;line-height:10.5px;">230</div>
<div class="pt" style="left:1013.00px;top:683.40px;font-size:13px;line-height:13px;transform:scaleX(1.145);transform-origin:0 0">86334117</div>
<div class="pt" style="left:1014.00px;width:200px;text-align:center;top:684.21px;font-size:10.5px;line-height:10.5px;">1</div>
<div class="pt" style="left:1137.00px;top:683.79px;font-size:11px;line-height:11px;">Hydraulic stop piston</div>
<div class="pt" style="-webkit-text-stroke:0.25px #111;left:1322.5px;top:683.79px;font-size:11px;line-height:11px;">液压止动活塞</div>
<div class="pt" style="right:924.50px;top:703.16px;font-size:10.5px;line-height:10.5px;">240</div>
<div class="pt" style="left:1013.00px;top:702.35px;font-size:13px;line-height:13px;transform:scaleX(1.145);transform-origin:0 0">86334174</div>
<div class="pt" style="left:1014.00px;width:200px;text-align:center;top:703.16px;font-size:10.5px;line-height:10.5px;">2</div>
<div class="pt" style="left:1137.00px;top:702.74px;font-size:11px;line-height:11px;">Lip seal</div>
<div class="pt" style="-webkit-text-stroke:0.25px #111;left:1322.5px;top:702.74px;font-size:11px;line-height:11px;">唇形密封</div>
<div class="a" style="left:952.2px;top:706.05px;width:5.2px;height:5.2px;border-radius:50%;background:#000"></div>
</div>


<!-- status bar -->
<svg class="i" style="left:20px;top:134px" width="16" height="16" viewBox="0 0 16 16" fill="none" stroke="#333" stroke-width="1.2"><path d="M6.5 3h9M6.5 10.5h9"/><path d="M3 0.5l.9 1.9 1.9.9-1.9.9L3 6.1l-.9-1.9L.2 3.3l1.9-.9z M3 8l.9 1.9 1.9.9-1.9.9L3 13.6l-.9-1.9-1.9-.9 1.9-.9z" fill="#333" stroke="none"/></svg>
<svg class="i" style="left:21px;top:174px" width="14" height="16" viewBox="0 0 14 16" fill="none" stroke="#333" stroke-width="1.2"><path d="M1 1h12v14l-6-4.5L1 15z"/></svg>
<svg class="i" style="left:21px;top:214px" width="14" height="16" viewBox="0 0 14 16" fill="none" stroke="#333" stroke-width="1.2"><rect x="1" y="1" width="12" height="14"/><path d="M3 3.5h8v7H3z M3 10l3-3 2 2 1.5-1 1.5 1.5"/><circle cx="9" cy="5.2" r=".6"/></svg>
<svg class="i" style="left:20px;top:255px" width="16" height="15" viewBox="0 0 16 15" fill="none" stroke="#333" stroke-width="1.2"><path d="M1 1h14v10H5l-4 3z"/></svg>
<svg class="i" style="left:20px;top:294px" width="16" height="16" viewBox="0 0 16 16" fill="none" stroke="#333" stroke-width="1.2"><path d="M11.5 5.5l-5.5 6a1.6 1.6 0 0 1-2.3-2.3L10 3a3 3 0 0 1 4.2 4.2L8 13.5a4.5 4.5 0 0 1-6.3-6.3L7 2"/></svg>
<svg class="i" style="left:20px;top:334px" width="16" height="17" viewBox="0 0 16 17" fill="none" stroke="#333" stroke-width="1.2"><path d="M1 16h14M3.5 12.5l1.5-5 5-4 3.5 3.5-4 5z M5 12.5L8 9.5"/><circle cx="8.8" cy="8.7" r="1"/></svg>
<svg class="i" style="left:20px;top:374px" width="16" height="16" viewBox="0 0 16 16" fill="none" stroke="#333" stroke-width="1.2"><path d="M8 1l7 3.5-7 3.5-7-3.5zM1 8l7 3.5L15 8M1 11.5L8 15l7-3.5"/></svg>
<div class="a" style="left:1885px;top:133px;width:14px;height:2px;background:#858585"></div>
<svg class="i" style="left:1884px;top:158px" width="16" height="16" viewBox="0 0 16 16" fill="none" stroke="#333" stroke-width="1.2"><circle cx="6.5" cy="6.5" r="5.5"/><path d="M10.5 10.5l5 5"/></svg>
<svg class="i" style="left:1884px;top:197px" width="16" height="17" viewBox="0 0 16 17" fill="none" stroke="#333" stroke-width="1.2"><path d="M1 7l2.5-6L6 7M1.7 5h3.6M11 1h4v3M1 11v5h4M9 9h6v5H9zM12 8v8"/></svg>
<svg class="i" style="left:1883px;top:238px" width="17" height="16" viewBox="0 0 17 16" fill="none" stroke="#333" stroke-width="1.2"><path d="M1 4.5h5M10 4.5h6M1 11.5h7M12 11.5h4"/><circle cx="8" cy="4.5" r="2"/><circle cx="10" cy="11.5" r="2"/></svg>
<svg class="i" style="left:1883px;top:277px" width="17" height="17" viewBox="0 0 17 17" fill="none" stroke="#333" stroke-width="1.2"><path d="M1 1.5l5 1.5 5-1.5v6M1 1.5v13l5 1.5 3-1M6 3v13"/><circle cx="12" cy="11.5" r="2.8"/><path d="M14 13.5l2 2"/></svg>
<svg class="i" style="left:1883px;top:317px" width="18" height="18" viewBox="0 0 18 18" fill="none" stroke="#333" stroke-width="1.2"><circle cx="9" cy="9" r="8"/><path d="M6.5 7a2.5 2.5 0 1 1 3.5 2.3c-.7.3-1 .8-1 1.5v.7"/><circle cx="9" cy="13.5" r=".5" fill="#333"/></svg>
<svg class="i" style="left:1883px;top:362px" width="18" height="6" viewBox="0 0 18 6" fill="none" stroke="#333" stroke-width="1.2"><circle cx="3" cy="3" r="1.8"/><circle cx="9" cy="3" r="1.8"/><circle cx="15" cy="3" r="1.8"/></svg>
<svg class="i" style="left:1851px;top:119px" width="8" height="6" viewBox="0 0 8 6" ><path d="M0.5 5.5L4 0.5l3.5 5z" fill="#777" stroke="none"/></svg>
<div class="a" style="left:1851px;top:390px;width:7px;height:51px;background:#cfcfc7;border-radius:4px"></div>
<svg class="i" style="left:1851px;top:965px" width="8" height="6" viewBox="0 0 8 6" ><path d="M0.5 0.5L4 5.5l3.5-5z" fill="#777" stroke="none"/></svg>
<div class="a" style="left:1703px;top:126px;width:134px;height:131px;background:#fff;border-radius:16px;box-shadow:0 4px 14px rgba(0,0,0,.10),0 0 1px rgba(0,0,0,.12)"></div>
<svg class="i" style="left:1716px;top:142px" width="20" height="20" viewBox="0 0 20 20" fill="none" stroke="#2e6ee6" stroke-width="1.5"><circle cx="5.6" cy="4.6" r="1.9"/><path d="M4.6 6.3L3.4 8.2" /><circle cx="3.6" cy="7.4" r="0.9" fill="#2e6ee6" stroke="none"/><path d="M11 3.6h4.2v4.4M3.6 10.5v5.4h4.6"/><text x="9.6" y="17.6" font-family="Liberation Sans" font-weight="bold" font-size="9.5" fill="#2e6ee6" stroke="none">W</text></svg>
<div class="a s" style="left:1740px;top:145px;font-size:12.2px">PDF转Word</div>
<svg class="i" style="left:1716px;top:182px" width="20" height="20" viewBox="0 0 20 20" fill="none" stroke="#1f9a5c" stroke-width="1.5"><circle cx="5.6" cy="4.6" r="1.9"/><path d="M4.6 6.3L3.4 8.2" /><circle cx="3.6" cy="7.4" r="0.9" fill="#1f9a5c" stroke="none"/><path d="M11 3.6h4.2v4.4M3.6 10.5v5.4h4.6"/><text x="9.6" y="17.6" font-family="Liberation Sans" font-weight="bold" font-size="9.5" fill="#1f9a5c" stroke="none">S</text></svg>
<div class="a s" style="left:1740px;top:185px;font-size:12.2px">PDF转Excel</div>
<svg class="i" style="left:1716px;top:222px" width="20" height="20" viewBox="0 0 20 20" fill="none" stroke="#e4622a" stroke-width="1.5"><circle cx="5.6" cy="4.6" r="1.9"/><path d="M4.6 6.3L3.4 8.2" /><circle cx="3.6" cy="7.4" r="0.9" fill="#e4622a" stroke="none"/><path d="M11 3.6h4.2v4.4M3.6 10.5v5.4h4.6"/><text x="9.6" y="17.6" font-family="Liberation Sans" font-weight="bold" font-size="9.5" fill="#e4622a" stroke="none">P</text></svg>
<div class="a s" style="left:1740px;top:225px;font-size:12.2px">PDF转PPT</div>
<svg class="i" style="left:17px;top:981px" width="15" height="13" viewBox="0 0 15 13" fill="none" stroke="#333" stroke-width="1.2"><rect x="1" y="1" width="13" height="11"/><path d="M4.5 3.5v6"/></svg>
<div class="sep" style="left:44px;top:980px;height:16px"></div>
<svg class="i" style="left:60px;top:982px" width="10" height="11" viewBox="0 0 10 11" fill="none" stroke="#333" stroke-width="1.2"><path d="M1.5 1v9M8.5 1l-4.5 4.5 4.5 4.5"/></svg>
<svg class="i" style="left:93px;top:982px" width="8" height="11" viewBox="0 0 8 11" fill="none" stroke="#333" stroke-width="1.2"><path d="M6.5 1L2 5.5l4.5 4.5"/></svg>
<div class="a" style="left:117px;top:978px;width:110px;height:20px;border:1px solid #cdc9c0;border-radius:3px;background:#fff"></div>
<div class="a s" style="left:149px;top:981px;font-size:13px">6 (6/16)</div>
<svg class="i" style="left:243px;top:982px" width="8" height="11" viewBox="0 0 8 11" fill="none" stroke="#333" stroke-width="1.2"><path d="M1.5 1l4.5 4.5L1.5 10"/></svg>
<svg class="i" style="left:274px;top:982px" width="10" height="11" viewBox="0 0 10 11" fill="none" stroke="#333" stroke-width="1.2"><path d="M8.5 1v9M1.5 1l4.5 4.5L1.5 10"/></svg>
<div class="sep" style="left:299px;top:980px;height:16px"></div>
<div class="a s" style="left:312px;top:981px;font-size:12px">回到第4页</div>
<div class="sep" style="left:379px;top:980px;height:16px"></div>
<div class="a s" style="left:392px;top:981px;font-size:12px">校对</div>
<svg class="i" style="left:1326px;top:982px" width="17" height="12" viewBox="0 0 17 12" fill="none" stroke="#333" stroke-width="1.2"><path d="M1 6c2-3.5 4.5-5 7.5-5s5.5 1.5 7.5 5c-2 3.5-4.5 5-7.5 5S3 9.5 1 6z"/><circle cx="8.5" cy="6" r="2.5"/></svg>
<svg class="i" style="left:1347px;top:985px" width="7" height="5" viewBox="0 0 7 5" fill="none" stroke="#333" stroke-width="1.2"><path d="M1 1l2.5 2.5L6 1"/></svg>
<div class="sep" style="left:1369px;top:980px;height:16px"></div>
<div class="hl" style="left:1377px;top:976px;width:23px;height:24px;background:#dcd8ce"></div>
<svg class="i" style="left:1381px;top:979px" width="16" height="16" viewBox="1381 979 16 16" fill="none" stroke="#333" stroke-width="1.2"><path d="M1383 980.5v4.3h12v-4.3M1383 994v-4.3h12v4.3"/></svg>
<div class="sep" style="left:1409px;top:980px;height:16px"></div>
<div class="hl" style="left:1418px;top:976px;width:23px;height:24px;background:#dcd8ce"></div>
<svg class="i" style="left:1423px;top:980px" width="15" height="16" viewBox="1423 980 15 16" fill="none" stroke="#333" stroke-width="1.2"><rect x="1424.5" y="981.5" width="11" height="12.3"/><path d="M1427.5 985.5h5.5M1427.5 988.5h3.5"/></svg>
<svg class="i" style="left:1455px;top:981px" width="14" height="14" viewBox="0 0 14 14" fill="none" stroke="#333" stroke-width="1.2"><rect x="1" y="1" width="4.5" height="12"/><rect x="8.5" y="1" width="4.5" height="12"/></svg>
<div class="sep" style="left:1482px;top:980px;height:16px"></div>
<div class="a" style="left:1493px;top:978px;width:20px;height:19px;background:#d9344a;border-radius:3px"></div>
<svg class="i" style="left:1499px;top:982px" width="9" height="11" viewBox="0 0 9 11" ><path d="M1 1v9l7-4.5z" fill="#fff" stroke="none"/></svg>
<div class="sep" style="left:1524px;top:980px;height:16px"></div>
<svg class="i" style="left:1537px;top:980px" width="17" height="16" viewBox="1537 980 17 16" fill="none" stroke="#333" stroke-width="1.2"><rect x="1538.5" y="981.6" width="12.6" height="12.2"/><path d="M1541.8 984.5v6.5M1547.8 984.5v6.5"/><circle cx="1544.8" cy="986" r=".5" fill="#333"/><circle cx="1544.8" cy="989.5" r=".5" fill="#333"/></svg>
<div class="hl" style="left:1565px;top:976px;width:23px;height:24px;background:#dcd8ce"></div>
<svg class="i" style="left:1568px;top:979px" width="18" height="18" viewBox="1568 979 18 18" fill="none" stroke="#333" stroke-width="1.2"><path d="M1570 984v-3h3M1580 981h3v3M1583 991v3h-3M1573 994h-3v-3"/><rect x="1572.8" y="983.5" width="7.5" height="7.5"/></svg>
<svg class="i" style="left:1599px;top:979px" width="19" height="18" viewBox="1599 979 19 18" fill="none" stroke="#333" stroke-width="1.2"><path d="M1603 992v-10.8h10v10.8"/><path d="M1601 993h14M1603 991l-2 2 2 2M1613 991l2 2-2 2"/></svg>
<div class="sep" style="left:1629px;top:980px;height:16px"></div>
<div class="a s" style="left:1645px;top:981px;font-size:12.5px">105%</div>
<svg class="i" style="left:1687px;top:985px" width="8" height="5" viewBox="0 0 8 5" fill="none" stroke="#333" stroke-width="1.2"><path d="M1 1l3 3 3-3"/></svg>
<div class="a" style="left:1712px;top:987px;width:12px;height:2px;background:#222"></div>
<div class="a" style="left:1738px;top:987px;width:53px;height:2px;background:#2f6fd7"></div>
<div class="a" style="left:1791px;top:987px;width:53px;height:2px;background:#c4c2bc"></div>
<div class="a" style="left:1786px;top:983px;width:10px;height:10px;border-radius:50%;background:#fff;border:1px solid #c8c8c8"></div>
<div class="a" style="left:1789px;top:986px;width:4px;height:4px;border-radius:50%;background:#999"></div>
<svg class="i" style="left:1858px;top:982px" width="12" height="12" viewBox="0 0 12 12" fill="none" stroke="#333" stroke-width="1.2"><path d="M6 0v12M0 6h12" stroke-width="1.6"/></svg>
<svg class="i" style="left:1888px;top:980px" width="17" height="16" viewBox="1888 980 17 16" fill="none" stroke="#333" stroke-width="1.2"><path d="M1890 985.5v-4h4M1898 981.5h4v4M1902 990.5v4h-4M1894 994.5h-4v-4M1901.5 982l-4 4M1890.5 994l4-4"/></svg>
<div class="a s" style="left:1631px;top:905px;font-size:21px;line-height:24px;color:#bdbab2">激活 Windows</div>
<div class="a s" style="left:1631px;top:931px;font-size:15.2px;line-height:18px;color:#bdbab2">转到“设置”以激活 Windows。</div>

<div style="position:absolute;left:0;top:976px;width:1920px;height:1px;background:#dcd6ca"></div>

</body></html>
